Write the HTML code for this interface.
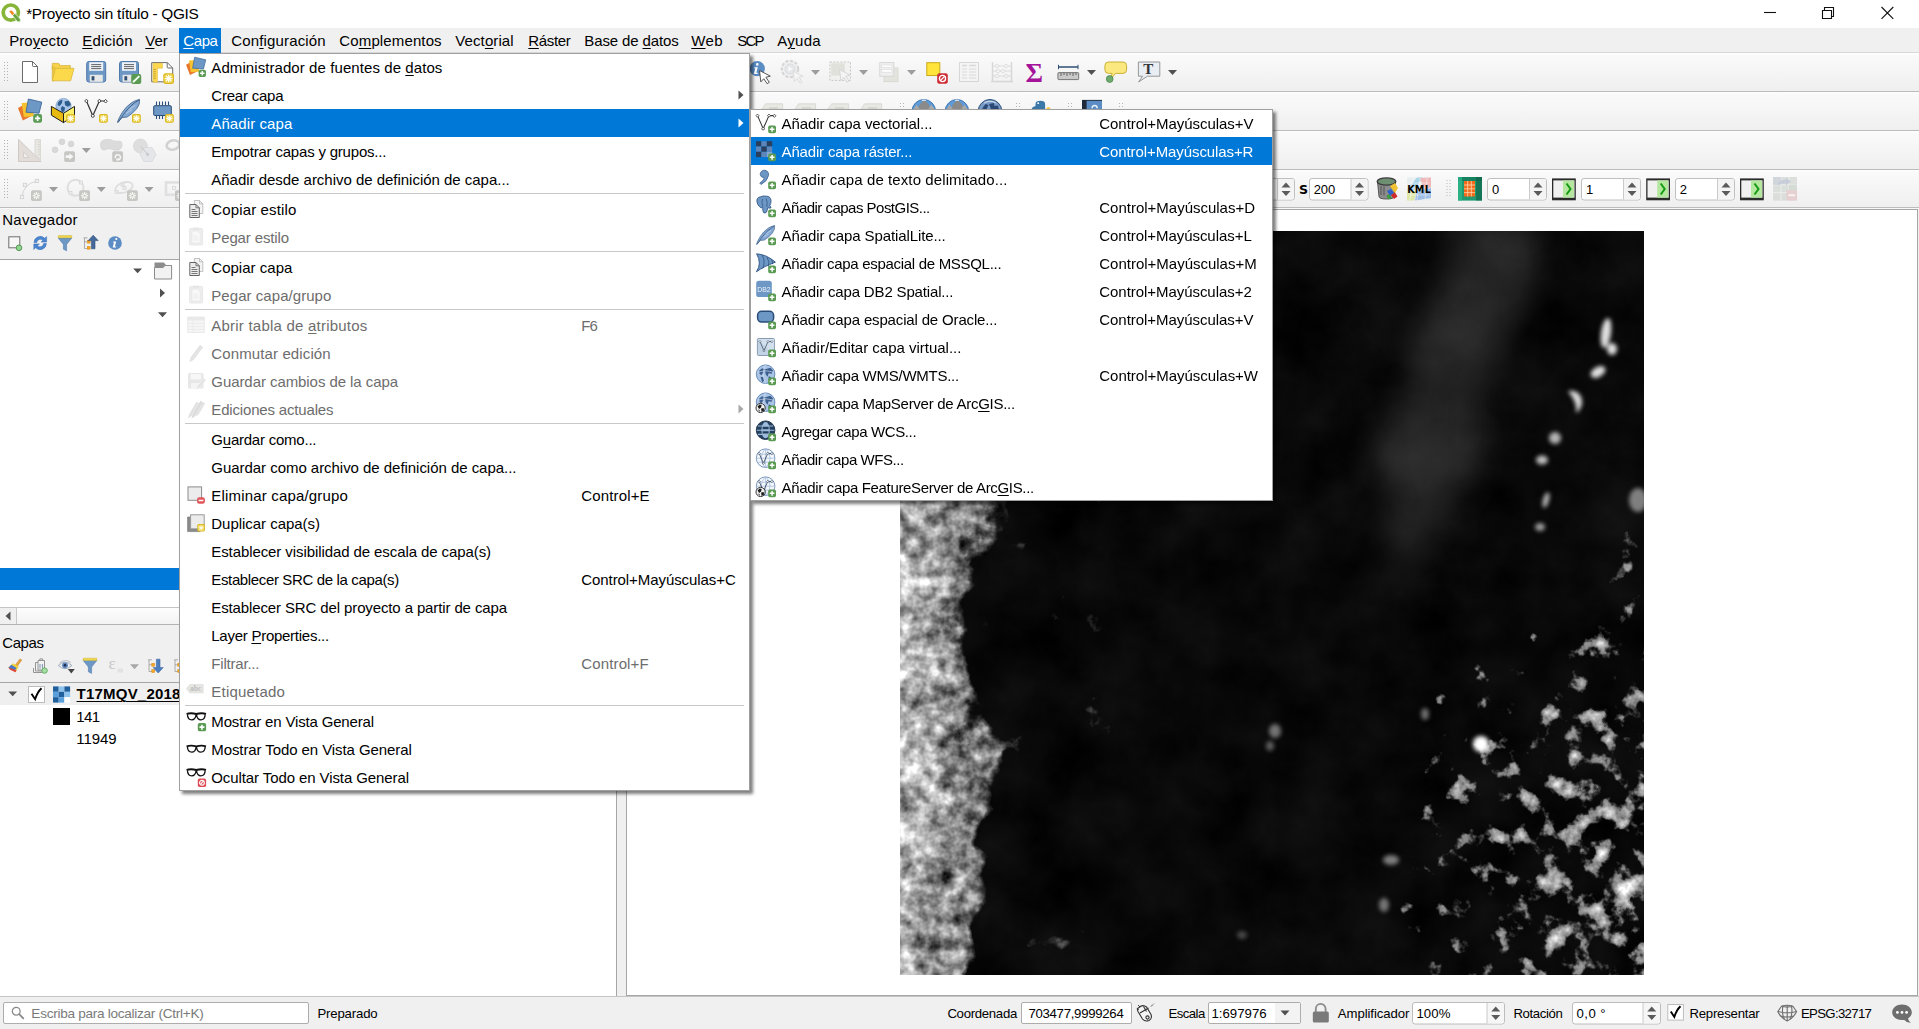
<!DOCTYPE html>
<html lang="es"><head><meta charset="utf-8"><title>*Proyecto sin título - QGIS</title>
<style>
html,body{margin:0;padding:0}
body{width:1919px;height:1029px;position:relative;overflow:hidden;background:#fff;font-family:"Liberation Sans",sans-serif;font-size:15px;color:#000}
div,span,svg{box-sizing:border-box}
.t{position:absolute;white-space:pre;line-height:20px}
.t u{text-decoration:underline;text-underline-offset:2px;text-decoration-thickness:1px}
svg{position:absolute;overflow:visible}
</style></head><body>
<div style="position:absolute;left:0px;top:0px;width:1919px;height:28px;background:#fff"></div>
<svg style="left:0px;top:0px" width="26" height="28" viewBox="0 0 26 28"><circle cx="10.800" cy="12.600" r="7.600" fill="none" stroke="#86b53a" stroke-width="3.700"/><path d="M12.600 15.600L14.900 13.300L20.300 19V21.800H17.400Z" fill="#6aa241" stroke="#f4fbe8" stroke-width=".7"/><path d="M9.300 11.500q.9-1.600 2.700-.7l2.300 2.500l-2 2z" fill="#f08a24"/></svg>
<span class="t" style="left:26.18px;top:3.86px;font-size:15.4px;color:#000;letter-spacing:-0.300px;">*Proyecto sin título - QGIS</span>
<svg style="left:1750px;top:0" width="169" height="28" viewBox="0 0 169 28"><g stroke="#111" stroke-width="1.1" fill="none"><path d="M14 12.5H26"/><path d="M72.5 10.5h9v8h-9z"/><path d="M74.5 10.5v-3h9v9h-2"/><path d="M131.500 7L143.300 18.800M143.300 7L131.500 18.800"/></g></svg>
<div style="position:absolute;left:0px;top:28px;width:1919px;height:25px;background:#f0f0f0"></div>
<div style="position:absolute;left:0px;top:52px;width:1919px;height:1px;background:#d9d9d9"></div>
<div style="position:absolute;left:179px;top:28px;width:42px;height:25px;background:#0078d7"></div>
<span class="t" style="left:9.30px;top:30.90px;font-size:15.0px;color:#000;letter-spacing:0.026px;">Pro<u>y</u>ecto</span>
<span class="t" style="left:82.30px;top:30.90px;font-size:15.0px;color:#000;letter-spacing:0.182px;"><u>E</u>dición</span>
<span class="t" style="left:145.30px;top:30.90px;font-size:15.0px;color:#000;letter-spacing:-0.053px;"><u>V</u>er</span>
<span class="t" style="left:183.30px;top:30.90px;font-size:15.0px;color:#fff;letter-spacing:-0.421px;"><u>C</u>apa</span>
<span class="t" style="left:231.30px;top:30.90px;font-size:15.0px;color:#000;letter-spacing:0.146px;">Con<u>f</u>iguración</span>
<span class="t" style="left:339.30px;top:30.90px;font-size:15.0px;color:#000;letter-spacing:0.130px;">Co<u>m</u>plementos</span>
<span class="t" style="left:455.30px;top:30.90px;font-size:15.0px;color:#000;letter-spacing:0.100px;">Vect<u>o</u>rial</span>
<span class="t" style="left:528.30px;top:30.90px;font-size:15.0px;color:#000;letter-spacing:-0.328px;"><u>R</u>áster</span>
<span class="t" style="left:584.30px;top:30.90px;font-size:15.0px;color:#000;letter-spacing:-0.122px;">Base de <u>d</u>atos</span>
<span class="t" style="left:691.30px;top:30.90px;font-size:15.0px;color:#000;letter-spacing:0.329px;"><u>W</u>eb</span>
<span class="t" style="left:737.30px;top:30.90px;font-size:15.0px;color:#000;letter-spacing:-1.778px;">SCP</span>
<span class="t" style="left:777.30px;top:30.90px;font-size:15.0px;color:#000;letter-spacing:0.252px;">A<u>y</u>uda</span>
<div style="position:absolute;left:0px;top:53px;width:1919px;height:38px;background:linear-gradient(#fdfdfd 0,#fdfdfd 1px,#fafafa 2px,#f5f5f5 50%,#efefef)"></div>
<div style="position:absolute;left:0px;top:91px;width:1919px;height:1px;background:#bcbcbc"></div>
<svg style="left:4px;top:62px" width="5" height="21" viewBox="0 0 5 21"><g fill="#b4b4b4"><rect x="0" y="0" width="1" height="1"/><rect x="3" y="0" width="1" height="1"/><rect x="0" y="3" width="1" height="1"/><rect x="3" y="3" width="1" height="1"/><rect x="0" y="6" width="1" height="1"/><rect x="3" y="6" width="1" height="1"/><rect x="0" y="9" width="1" height="1"/><rect x="3" y="9" width="1" height="1"/><rect x="0" y="12" width="1" height="1"/><rect x="3" y="12" width="1" height="1"/><rect x="0" y="15" width="1" height="1"/><rect x="3" y="15" width="1" height="1"/><rect x="0" y="18" width="1" height="1"/><rect x="3" y="18" width="1" height="1"/></g></svg>
<div style="position:absolute;left:0px;top:92px;width:1919px;height:38px;background:linear-gradient(#fdfdfd 0,#fdfdfd 1px,#fafafa 2px,#f5f5f5 50%,#efefef)"></div>
<div style="position:absolute;left:0px;top:130px;width:1919px;height:1px;background:#bcbcbc"></div>
<svg style="left:4px;top:101px" width="5" height="21" viewBox="0 0 5 21"><g fill="#b4b4b4"><rect x="0" y="0" width="1" height="1"/><rect x="3" y="0" width="1" height="1"/><rect x="0" y="3" width="1" height="1"/><rect x="3" y="3" width="1" height="1"/><rect x="0" y="6" width="1" height="1"/><rect x="3" y="6" width="1" height="1"/><rect x="0" y="9" width="1" height="1"/><rect x="3" y="9" width="1" height="1"/><rect x="0" y="12" width="1" height="1"/><rect x="3" y="12" width="1" height="1"/><rect x="0" y="15" width="1" height="1"/><rect x="3" y="15" width="1" height="1"/><rect x="0" y="18" width="1" height="1"/><rect x="3" y="18" width="1" height="1"/></g></svg>
<div style="position:absolute;left:0px;top:131px;width:1919px;height:38px;background:linear-gradient(#fdfdfd 0,#fdfdfd 1px,#fafafa 2px,#f5f5f5 50%,#efefef)"></div>
<div style="position:absolute;left:0px;top:169px;width:1919px;height:1px;background:#bcbcbc"></div>
<svg style="left:4px;top:140px" width="5" height="21" viewBox="0 0 5 21"><g fill="#b4b4b4"><rect x="0" y="0" width="1" height="1"/><rect x="3" y="0" width="1" height="1"/><rect x="0" y="3" width="1" height="1"/><rect x="3" y="3" width="1" height="1"/><rect x="0" y="6" width="1" height="1"/><rect x="3" y="6" width="1" height="1"/><rect x="0" y="9" width="1" height="1"/><rect x="3" y="9" width="1" height="1"/><rect x="0" y="12" width="1" height="1"/><rect x="3" y="12" width="1" height="1"/><rect x="0" y="15" width="1" height="1"/><rect x="3" y="15" width="1" height="1"/><rect x="0" y="18" width="1" height="1"/><rect x="3" y="18" width="1" height="1"/></g></svg>
<div style="position:absolute;left:0px;top:170px;width:1919px;height:37px;background:linear-gradient(#fdfdfd 0,#fdfdfd 1px,#fafafa 2px,#f5f5f5 50%,#efefef)"></div>
<div style="position:absolute;left:0px;top:207px;width:1919px;height:1px;background:#bcbcbc"></div>
<svg style="left:4px;top:179px" width="5" height="21" viewBox="0 0 5 21"><g fill="#b4b4b4"><rect x="0" y="0" width="1" height="1"/><rect x="3" y="0" width="1" height="1"/><rect x="0" y="3" width="1" height="1"/><rect x="3" y="3" width="1" height="1"/><rect x="0" y="6" width="1" height="1"/><rect x="3" y="6" width="1" height="1"/><rect x="0" y="9" width="1" height="1"/><rect x="3" y="9" width="1" height="1"/><rect x="0" y="12" width="1" height="1"/><rect x="3" y="12" width="1" height="1"/><rect x="0" y="15" width="1" height="1"/><rect x="3" y="15" width="1" height="1"/><rect x="0" y="18" width="1" height="1"/><rect x="3" y="18" width="1" height="1"/></g></svg>
<svg style="left:0px;top:53px" width="1919" height="156" viewBox="0 53 1919 156"><path d="M22.500 61.500h10l5 5v16h-15z" fill="#fff" stroke="#6b6b6b" stroke-width="1" stroke-linejoin="round"/><path d="M32.500 61.600v4.100q0 .8 .8 .8h4.100" fill="none" stroke="#6b6b6b" stroke-width="1"/><path d="M52.3 63.4h6.6l1.2 2.2h10.2v4h-18z" fill="#f7d24a" stroke="#d6b43c" stroke-width=".8" stroke-linejoin="round"/><path d="M52.3 66v14.8h1.5l2-12z" fill="#efc73f" stroke="#d6b43c" stroke-width=".8"/><path d="M55.4 68.4h18.6l-3.4 12.4h-18.3z" fill="#fcd94a" stroke="#d9b73e" stroke-width=".8" stroke-linejoin="round"/><g transform="translate(86.2 61)"><rect x="0.5" y="0.5" width="19" height="20.5" rx="2.2" fill="#6d97c4" stroke="#4f79ab"/><rect x="3" y="1.2" width="14" height="8.6" fill="#eef2f8"/><path d="M5 3.6h10M5 5.6h10M5 7.6h10" stroke="#555" stroke-width="0.9"/><rect x="3.6" y="13.8" width="13" height="7" fill="#e8e8e8"/><rect x="5.4" y="15.2" width="2.8" height="4.2" fill="#2f4f70"/></g><g transform="translate(119 61)"><rect x="0.5" y="0.5" width="19" height="20.5" rx="2.2" fill="#6d97c4" stroke="#4f79ab"/><rect x="3" y="1.2" width="14" height="8.6" fill="#eef2f8"/><path d="M5 3.6h10M5 5.6h10M5 7.6h10" stroke="#555" stroke-width="0.9"/><rect x="3.6" y="13.8" width="13" height="7" fill="#e8e8e8"/><rect x="5.4" y="15.2" width="2.8" height="4.2" fill="#2f4f70"/></g><g transform="translate(131.2 74)"><rect x="0" y="0" width="10" height="10" rx="2" fill="#5a9a52"/><path d="M2.3 7.7L7.6 2.6" stroke="#f2fff0" stroke-width="1.9" stroke-linecap="round"/></g><path d="M151.7 62.6h15.6l5.4 5.4v13.8h-21z" fill="#fff" stroke="#6b6b6b" stroke-width="1" stroke-linejoin="round"/><path d="M167.2 62.8v4.4q0 .8 .8 .8h4.4" fill="none" stroke="#6b6b6b"/><path d="M153 63.3h9.4v4.9h-5v14h-4.4z" fill="#fbd84e" stroke="#e0b93a" stroke-width=".6"/><path d="M153.6 69.5h2.2M153.6 71.7h2.2M153.6 73.9h2.2M153.6 76.1h2.2M153.6 78.3h2.2" stroke="#b8942a" stroke-width=".8"/><g transform="translate(163.3 73.2) scale(1.1888888888888889)"><rect x="0" y="0" width="9" height="9" rx="1.8" fill="#d9b51c"/><rect x="0.8" y="0.8" width="7.4" height="7.4" rx="1.2" fill="#ecd04a"/><path d="M4.5 1.3v6.4M1.3 4.5h6.4M2.2 2.2l4.6 4.6M6.8 2.2l-4.6 4.6" stroke="#fffdf0" stroke-width="1.1"/></g><circle cx="757.200" cy="68.600" r="7.700" fill="#5b8cc4"/><path d="M756 64.400a1.300 1.300 0 1 0 2.600 0a1.300 1.300 0 1 0-2.600 0zM754.400 67.200h3.400l-1.500 5.600h1.500l-.3 1.100h-3.700l1.500-5.600h-1.200z" fill="#fff"/><path d="M759.5 70.5l10.8 5.6l-4.4 1.2l3.4 5l-2.2 1.4l-3.3-5l-3 3.2z" fill="#fff" stroke="#444" stroke-width=".9" stroke-linejoin="round"/><g opacity=".55"><circle cx="790" cy="69" r="8.2" fill="#ececec" stroke="#bdbdbd" stroke-width="2.2" stroke-dasharray="3.2 1.6"/><circle cx="790" cy="69" r="5" fill="#d8dce2" stroke="#c3c7cd"/><path d="M788.4 66.5l4.2 2.5l-4.2 2.5z" fill="#fff"/><path d="M793 71l10 5.2l-4 1.1l3.1 4.6l-2 1.3l-3-4.6l-2.8 3z" fill="#f4f4f4" stroke="#c6c6c6" stroke-width=".9"/></g><path d="M811 70h9l-4.5 5z" fill="#9d9d9d"/><g opacity=".7"><rect x="829.9" y="62" width="20.6" height="18.4" fill="#f1f1ef" stroke="#b5b5b5" stroke-dasharray="2 1.5"/><rect x="831.2" y="63.2" width="13.6" height="12.4" fill="#d9d9d1"/><path d="M839.5 69.5l10.5 5.6l-4.2 1.1l3.2 4.8l-2 1.3l-3.2-4.8l-2.9 3.1z" fill="#f4f4f4" stroke="#c6c6c6" stroke-width=".9"/></g><path d="M859 70h9l-4.5 5z" fill="#9d9d9d"/><g opacity=".7"><rect x="884" y="68" width="14" height="13.6" fill="#deded6" stroke="#cfcfc8"/><rect x="879.8" y="62.6" width="14" height="13.6" fill="#eee" stroke="#c9c9c9"/><rect x="881.6" y="65" width="10.4" height="2.6" fill="#fff" stroke="#d0d0d0" stroke-width=".6"/><rect x="881.6" y="69.6" width="10.4" height="2.6" fill="#fff" stroke="#d0d0d0" stroke-width=".6"/></g><path d="M907 70h9l-4.5 5z" fill="#9d9d9d"/><rect x="926.8" y="62.7" width="13" height="12.8" fill="#ffe53b" stroke="#c9a91a" stroke-width="1"/><g transform="translate(937.2 73.2) scale(1.06)"><rect x="0" y="0" width="10" height="10" rx="2" fill="#cf2b35"/><circle cx="5" cy="5" r="2.9" fill="none" stroke="#fff" stroke-width="1.3"/><path d="M3 7L7 3" stroke="#fff" stroke-width="1.3"/></g><g opacity=".6" fill="none" stroke="#c4c4c4"><rect x="959.5" y="62.5" width="19" height="19" fill="#f4f4f4"/><path d="M962 65.5h5M969 65.5h7" stroke-width="1.6"/><path d="M962 69h5M969 69h7M962 72h5M969 72h7M962 75h5M969 75h7M962 78h5M969 78h7" stroke-width=".9"/></g><g opacity=".6" fill="none" stroke="#c4c4c4"><path d="M992.5 62v19M1011.5 62v19M991 81.5h22" stroke-width="1.4"/><path d="M993 66h18M993 71h18M993 76h18" stroke-width=".8"/><path d="M997 64l2.5 2l-2.5 2l-2.5-2zM1006 64l2.5 2l-2.5 2l-2.5-2zM998 69l2.5 2l-2.5 2l-2.5-2zM1003 69l2.5 2l-2.5 2l-2.5-2zM997 74l2.5 2l-2.5 2l-2.5-2zM1006 74l2.5 2l-2.5 2l-2.5-2z" fill="#f2f2f2" stroke-width=".8"/></g><text x="1025.6" y="81.6" font-family="'Liberation Serif',serif" font-weight="bold" font-size="27.5" fill="#a4139a" textLength="17.5" lengthAdjust="spacingAndGlyphs">Σ</text><path d="M1058.5 64.8v4.4M1078 64.8v4.4" stroke="#2c4f75" stroke-width="1"/><path d="M1058.5 67h19.5" stroke="#2c4f75" stroke-width="1.5"/><rect x="1057.9" y="72.6" width="20.8" height="7" rx=".8" fill="#c9c9c9" stroke="#6a6a6a" stroke-width=".9"/><path d="M1061 73v3M1064 73v2M1067 73v3M1070 73v2M1073 73v3M1076 73v2" stroke="#555" stroke-width=".9"/><path d="M1087 70h9l-4.5 5z" fill="#505050"/><path d="M1108.5 62h14.5q3.6 0 3.6 3.6v4.2q0 3.6-3.6 3.6h-7.6l-3.4 4.4l-1.2-.8l1.4-3.6h-3.7q-3.6 0-3.6-3.6v-4.2q0-3.6 3.6-3.6z" fill="#fbe97f" stroke="#c4a92b" stroke-width=".9"/><circle cx="1109.7" cy="79" r="3.4" fill="#6faa6f" stroke="#4f8a50" stroke-width=".8"/><path d="M1138.4 62h21.4v14.2h-12.4l-8.8 5.8l4-5.8h-4.2z" fill="#e9eef4" stroke="#8d8d8d" stroke-width=".9" stroke-linejoin="round"/><text x="1143.2" y="74" font-family="'Liberation Serif',serif" font-weight="bold" font-size="15" fill="#333">T</text><path d="M1168 70h9l-4.5 5z" fill="#505050"/><g transform="translate(18 99)"><path d="M0 9l8.6-4.8l5.4 12.6l-9.2 4.6z" fill="#e8762d"/><path d="M3.6 3.9l11.2-.6l1 14l-10 .8z" fill="#f6c22d"/><path d="M10.4 0l13.4 3.2l-2.8 11l-13-1z" fill="#6d97c4" stroke="#3f6a99" stroke-width=".9" stroke-linejoin="round"/><g transform="translate(15.2 15) scale(0.9777777777777779)"><rect x="0" y="0" width="9" height="9" rx="2" fill="#5a9a52"/><path d="M4.5 1.8v5.4M1.8 4.5h5.4" stroke="#fff" stroke-width="1.7"/></g></g><circle cx="63.5" cy="106" r="7.6" fill="#a9c6ea" stroke="#6d8fb8" stroke-width=".6"/><path d="M58 102.5q2-3 4.5-2.6l-.6 3.4l-2.2 2.6l-2.1-.6zM64.5 101.5l3.8-.8q2.4 1.6 2.6 4.4l-3 1.6l-2.8-1.4zM62 106l3 1.6l-.6 3.6l-2.4 1.2l-1.2-3.6z" fill="#2f5d8e"/><path d="M51.4 106.4l12.1 6.9v9.3l-12.1-7.4z" fill="#e8b90f" stroke="#1e1e1e" stroke-width="1" stroke-linejoin="round"/><path d="M63.5 113.3l11-6.9v8.8l-11 7.4z" fill="#fdf16a" stroke="#1e1e1e" stroke-width="1" stroke-linejoin="round"/><g transform="translate(66.2 114) scale(0.9777777777777779)"><rect x="0" y="0" width="9" height="9" rx="1.8" fill="#d9b51c"/><rect x="0.8" y="0.8" width="7.4" height="7.4" rx="1.2" fill="#ecd04a"/><path d="M4.5 1.3v6.4M1.3 4.5h6.4M2.2 2.2l4.6 4.6M6.8 2.2l-4.6 4.6" stroke="#fffdf0" stroke-width="1.1"/></g><g transform="translate(85.8 98.8)"><path d="M0.6 2.2L7 17M13.6 2.2L7 17M13.6 2.2h6" fill="none" stroke="#333" stroke-width="1.2"/><g fill="#fff" stroke="#333" stroke-width=".9"><path d="M0.6 .4l1.7 1.8l-1.7 1.8l-1.7-1.8zM13.6 .4l1.7 1.8l-1.7 1.8l-1.7-1.8zM19.8 .6l1.7 1.8l-1.7 1.8l-1.7-1.8z"/><circle cx="7" cy="17" r="1.5"/></g></g><g transform="translate(99 114) scale(0.9777777777777779)"><rect x="0" y="0" width="9" height="9" rx="1.8" fill="#d9b51c"/><rect x="0.8" y="0.8" width="7.4" height="7.4" rx="1.2" fill="#ecd04a"/><path d="M4.5 1.3v6.4M1.3 4.5h6.4M2.2 2.2l4.6 4.6M6.8 2.2l-4.6 4.6" stroke="#fffdf0" stroke-width="1.1"/></g><g transform="translate(117.2 99)"><path d="M22.4 .4q.6 5-3 9.4q-4 4.8-9.4 8.2l-5 .6q-2.6 2.4-4.4 5l-.4-.4q1.8-5 5-10q3.6-5.6 8.8-9.2q4-2.8 8.400-3.600z" fill="#86a9d4" stroke="#3a5f88" stroke-width=".8" stroke-linejoin="round"/><path d="M21.8 1q-9 5-15.600 14.600q-3 4.400-5.200 7.600" fill="none" stroke="#35577f" stroke-width=".9"/><path d="M18 6.500l-6.600 4.200M14.800 10.800l-6 3.400" stroke="#c5d8ef" stroke-width=".8"/></g><g transform="translate(132 114) scale(0.9777777777777779)"><rect x="0" y="0" width="9" height="9" rx="1.8" fill="#d9b51c"/><rect x="0.8" y="0.8" width="7.4" height="7.4" rx="1.2" fill="#ecd04a"/><path d="M4.5 1.3v6.4M1.3 4.5h6.4M2.2 2.2l4.6 4.6M6.8 2.2l-4.6 4.6" stroke="#fffdf0" stroke-width="1.1"/></g><path d="M156.500 101.500v4M159.500 101.500v4M162.500 101.500v4M165.500 101.500v4M168.500 101.500v4M156.500 115.500v3.600M159.500 115.500v3.600M162.500 115.500v3.600M165.500 115.500v3.600" stroke="#2a4d78" stroke-width="1.100"/><rect x="153.700" y="105.700" width="17.600" height="9.800" rx="1" fill="#6d97c4" stroke="#2a4d78" stroke-width="1"/><g transform="translate(165 114) scale(0.9777777777777779)"><rect x="0" y="0" width="9" height="9" rx="1.8" fill="#d9b51c"/><rect x="0.8" y="0.8" width="7.4" height="7.4" rx="1.2" fill="#ecd04a"/><path d="M4.5 1.3v6.4M1.3 4.5h6.4M2.2 2.2l4.6 4.6M6.8 2.2l-4.6 4.6" stroke="#fffdf0" stroke-width="1.1"/></g><path d="M18.500 139.400v22.100h22.600z" fill="#e3ddd9" stroke="#cbc5c1" stroke-width=".9" stroke-linejoin="round"/><path d="M23.600 152.200v5.200h5.400z" fill="#f4f4f4" stroke="#cbc5c1" stroke-width=".8"/><path d="M35 139.600h5.500v20l-5.500-5.500z" fill="#e9e7e1" stroke="#d2d0ca" stroke-width=".7"/><path d="M38 142h2M38 144.500h2M38 147h2M38 149.500h2M38 152h2M38 154.500h2" stroke="#cfcdc6" stroke-width=".7"/><g fill="#d8d8d8" stroke="#cdcdcd" stroke-width=".6"><circle cx="62" cy="141.800" r="2.900"/><circle cx="71" cy="144" r="2.900"/><circle cx="55" cy="149.800" r="2.900"/></g><g transform="translate(64.2 151.2) scale(1.08)"><rect x="0" y="0" width="10" height="10" rx="1.600" fill="#c6c6c3"/><path d="M1.4 3.8h3.4v-2l3.8 3.2l-3.8 3.2v-2h-3.4z" fill="#f6f6f6"/></g><path d="M81.8 148h9l-4.5 5z" fill="#9d9d9d"/><path d="M100.500 146q-1-5.500 5-6.500q4-.6 8 1.200q3.500 1 6.500.400q2.500.800 2 4.600q-.800 4.400-5 4.600q-3.500-.200-6.500-1.400q-3.500-.600-6.500 1.400q-3-.600-3.500-4.300z" fill="#dbdbdb" stroke="#d0d0d0" stroke-width=".6"/><g transform="translate(112.2 151.2) scale(1.08)"><rect x="0" y="0" width="10" height="10" rx="1.600" fill="#c6c6c3"/><path d="M3 6.4a2.4 2.4 0 1 1 2.6 1.6" fill="none" stroke="#f6f6f6" stroke-width="1.4"/><path d="M6.6 6.6l-1.600 2.800l-1.800-2.400z" fill="#f6f6f6"/></g><circle cx="140.400" cy="146" r="7" fill="#dedede" stroke="#d2d2d2" stroke-width=".6"/><path d="M140 154.500l4-7h8l4 7l-4 7h-8z" fill="#e4e6ea" stroke="#d4d6da" stroke-width=".7"/><path d="M141 146.500l6.500 7.500" stroke="#c2c2c2" stroke-width=".9"/><rect x="146.400" y="153.200" width="2.400" height="2.400" fill="#c4c4c4"/><ellipse cx="173" cy="145" rx="6.500" ry="4.600" fill="none" stroke="#d2d2d2" stroke-width="2.600" transform="rotate(-12 173 145)"/><path d="M22 197q1-13 15-16" fill="none" stroke="#d6d6d6" stroke-width="1"/><g fill="#f0f0f0" stroke="#d0d0d0" stroke-width=".8"><rect x="20.300" y="195.300" width="3.400" height="3.400"/><rect x="23.300" y="183.300" width="3.400" height="3.400"/><rect x="35.300" y="179.300" width="3.400" height="3.400"/></g><g transform="translate(31 190.3) scale(1.08)"><rect x="0" y="0" width="10" height="10" rx="1.600" fill="#c6c6c3"/><path d="M5 1.6v6.8M1.6 5h6.8M2.6 2.6l4.8 4.8M7.4 2.6l-4.8 4.8" stroke="#f4f4f2" stroke-width="1.2"/><circle cx="5" cy="5" r="1" fill="#c9c9c5"/></g><path d="M49 187h9l-4.5 5z" fill="#9d9d9d"/><circle cx="75.500" cy="187.800" r="8" fill="none" stroke="#dedede" stroke-width="2"/><g fill="#ececec" stroke="#d4d4d4" stroke-width=".7"><rect x="79.500" y="181" width="3" height="3"/><rect x="69" y="191.500" width="3" height="3"/></g><g transform="translate(79.2 190.3) scale(1.08)"><rect x="0" y="0" width="10" height="10" rx="1.600" fill="#c6c6c3"/><path d="M5 1.6v6.8M1.6 5h6.8M2.6 2.6l4.8 4.8M7.4 2.6l-4.8 4.8" stroke="#f4f4f2" stroke-width="1.2"/><circle cx="5" cy="5" r="1" fill="#c9c9c5"/></g><path d="M96.8 187h9l-4.5 5z" fill="#9d9d9d"/><ellipse cx="124" cy="187.500" rx="9" ry="5" fill="none" stroke="#dedede" stroke-width="1.800" transform="rotate(-18 124 187.500)"/><g fill="#ececec" stroke="#d4d4d4" stroke-width=".7"><rect x="121" y="183" width="3" height="3"/><rect x="123" y="186.500" width="3" height="3"/><rect x="115" y="190.500" width="3" height="3"/></g><g transform="translate(127 190.3) scale(1.08)"><rect x="0" y="0" width="10" height="10" rx="1.600" fill="#c6c6c3"/><path d="M5 1.6v6.8M1.6 5h6.8M2.6 2.6l4.8 4.8M7.4 2.6l-4.8 4.8" stroke="#f4f4f2" stroke-width="1.2"/><circle cx="5" cy="5" r="1" fill="#c9c9c5"/></g><path d="M144.6 187h9l-4.5 5z" fill="#9d9d9d"/><rect x="166" y="182.400" width="16" height="12.400" fill="none" stroke="#e0e0e0" stroke-width="2.600"/><rect x="172.300" y="186.300" width="3.200" height="3.200" fill="#f0f0f0" stroke="#d4d4d4" stroke-width=".7"/><g transform="translate(175 190.3) scale(1.08)"><rect x="0" y="0" width="10" height="10" rx="1.600" fill="#c6c6c3"/><path d="M5 1.6v6.8M1.6 5h6.8M2.6 2.6l4.8 4.8M7.4 2.6l-4.8 4.8" stroke="#f4f4f2" stroke-width="1.2"/><circle cx="5" cy="5" r="1" fill="#c9c9c5"/></g><g fill="#b4b4b4"><rect x="900" y="103" width="1" height="1"/><rect x="903" y="103" width="1" height="1"/><rect x="900" y="106" width="1" height="1"/><rect x="903" y="106" width="1" height="1"/><rect x="900" y="109" width="1" height="1"/><rect x="903" y="109" width="1" height="1"/><rect x="900" y="112" width="1" height="1"/><rect x="903" y="112" width="1" height="1"/><rect x="900" y="115" width="1" height="1"/><rect x="903" y="115" width="1" height="1"/></g><g fill="#b4b4b4"><rect x="1016" y="103" width="1" height="1"/><rect x="1019" y="103" width="1" height="1"/><rect x="1016" y="106" width="1" height="1"/><rect x="1019" y="106" width="1" height="1"/><rect x="1016" y="109" width="1" height="1"/><rect x="1019" y="109" width="1" height="1"/><rect x="1016" y="112" width="1" height="1"/><rect x="1019" y="112" width="1" height="1"/><rect x="1016" y="115" width="1" height="1"/><rect x="1019" y="115" width="1" height="1"/></g><g fill="#b4b4b4"><rect x="1068" y="103" width="1" height="1"/><rect x="1071" y="103" width="1" height="1"/><rect x="1068" y="106" width="1" height="1"/><rect x="1071" y="106" width="1" height="1"/><rect x="1068" y="109" width="1" height="1"/><rect x="1071" y="109" width="1" height="1"/><rect x="1068" y="112" width="1" height="1"/><rect x="1071" y="112" width="1" height="1"/><rect x="1068" y="115" width="1" height="1"/><rect x="1071" y="115" width="1" height="1"/></g><g fill="#b4b4b4"><rect x="1119" y="103" width="1" height="1"/><rect x="1122" y="103" width="1" height="1"/><rect x="1119" y="106" width="1" height="1"/><rect x="1122" y="106" width="1" height="1"/><rect x="1119" y="109" width="1" height="1"/><rect x="1122" y="109" width="1" height="1"/><rect x="1119" y="112" width="1" height="1"/><rect x="1122" y="112" width="1" height="1"/><rect x="1119" y="115" width="1" height="1"/><rect x="1122" y="115" width="1" height="1"/></g><path d="M762 109l3.600-5.200h17v5.200z" fill="#e9e9e3" stroke="#d4d4d0" stroke-width=".8"/><path d="M769 108h9" stroke="#d0d0cc" stroke-width="1.500"/><path d="M795 109l3.600-5.200h17v5.200z" fill="#e9e9e3" stroke="#d4d4d0" stroke-width=".8"/><path d="M802 108h9" stroke="#d0d0cc" stroke-width="1.500"/><path d="M828 109l3.600-5.200h17v5.200z" fill="#e9e9e3" stroke="#d4d4d0" stroke-width=".8"/><path d="M835 108h9" stroke="#d0d0cc" stroke-width="1.500"/><path d="M861 109l3.600-5.200h17v5.200z" fill="#e9e9e3" stroke="#d4d4d0" stroke-width=".8"/><path d="M868 108h9" stroke="#d0d0cc" stroke-width="1.500"/><circle cx="923.8" cy="111.300" r="11.800" fill="#5d9ad8" stroke="#3d70ad" stroke-width=".9"/><path d="M919.8 104.500l3-3.500h3l3 3.500l2 4.500h-13z" fill="#8a8a8a"/><path d="M913.8 109l2.500-4.500l3.500 4.500zM928.3 109l3-4.500l3 4.500z" fill="#a8a8a8"/><path d="M921.8 100.500q2-.800 4 0" stroke="#dfeefc" stroke-width="1.200" fill="none"/><circle cx="956.9" cy="111.300" r="11.800" fill="#5d9ad8" stroke="#3d70ad" stroke-width=".9"/><path d="M952.9 104.500l3-3.500h3l3 3.500l2 4.500h-13z" fill="#8a8a8a"/><path d="M946.9 109l2.500-4.500l3.500 4.500zM961.4 109l3-4.500l3 4.500z" fill="#a8a8a8"/><path d="M954.9 100.500q2-.800 4 0" stroke="#dfeefc" stroke-width="1.200" fill="none"/><circle cx="990" cy="111.300" r="11.800" fill="#7a9cc6" stroke="#2d4f7d" stroke-width="1"/><path d="M982 108.500l3.500-4.500l3 1l-2 4.500zM989 104l5-1l.500 3l3.500-.500l1 4h-8z" fill="#2b4a77"/><path d="M984 103q6-3.500 12 0" stroke="#dbe6f4" stroke-width=".9" fill="none"/><path d="M1031.500 109.500q.500-3 4-3.200v-2.300q0-3.200 5-3.200q4.600 0 4.600 3.200v5.500z" fill="#3b77a8"/><circle cx="1038.200" cy="103.200" r=".9" fill="#fff"/><path d="M1046 109.500q.300-2.600 2.400-2.600q2 0 2.400 2.600z" fill="#f7c93e"/><rect x="1082" y="100" width="20" height="12" fill="#5b8cc4"/><rect x="1082" y="100" width="4.600" height="12" fill="#1e2a3a"/><path d="M1082 100.400h20" stroke="#1e2a3a" stroke-width=".9"/><path d="M1092.200 108.200q-.200-2.600 2.400-2.600q2.400 0 2.600 2.600" fill="none" stroke="#eaf1fa" stroke-width="1.500"/><rect x="1260" y="178.5" width="34.5" height="21.5" rx="2.500" fill="#fff" stroke="#b9b9b9" stroke-width=".9"/><path d="M1277.5 179.0h14.5q2 0 2 2v16.5q0 2-2 2h-14.5z" fill="#f4f4f4"/><path d="M1277.5 179.0v20.5" stroke="#c4c4c4" stroke-width=".9"/><path d="M1281.5 187.5h9l-4.500-5z" fill="#5a5a5a"/><path d="M1281.5 191.0h9l-4.500 5z" fill="#5a5a5a"/><rect x="1309.5" y="178.5" width="58.5" height="21.5" rx="2.500" fill="#fff" stroke="#b9b9b9" stroke-width=".9"/><path d="M1351.0 179.0h14.5q2 0 2 2v16.5q0 2-2 2h-14.5z" fill="#f4f4f4"/><path d="M1351.0 179.0v20.5" stroke="#c4c4c4" stroke-width=".9"/><path d="M1355.0 187.5h9l-4.500-5z" fill="#5a5a5a"/><path d="M1355.0 191.0h9l-4.500 5z" fill="#5a5a5a"/><rect x="1487.5" y="178.5" width="59" height="21.5" rx="2.500" fill="#fff" stroke="#b9b9b9" stroke-width=".9"/><path d="M1529.5 179.0h14.5q2 0 2 2v16.5q0 2-2 2h-14.5z" fill="#f4f4f4"/><path d="M1529.5 179.0v20.5" stroke="#c4c4c4" stroke-width=".9"/><path d="M1533.5 187.5h9l-4.500-5z" fill="#5a5a5a"/><path d="M1533.5 191.0h9l-4.500 5z" fill="#5a5a5a"/><rect x="1581.5" y="178.5" width="59" height="21.5" rx="2.500" fill="#fff" stroke="#b9b9b9" stroke-width=".9"/><path d="M1623.5 179.0h14.5q2 0 2 2v16.5q0 2-2 2h-14.5z" fill="#f4f4f4"/><path d="M1623.5 179.0v20.5" stroke="#c4c4c4" stroke-width=".9"/><path d="M1627.5 187.5h9l-4.500-5z" fill="#5a5a5a"/><path d="M1627.5 191.0h9l-4.500 5z" fill="#5a5a5a"/><rect x="1675.5" y="178.5" width="59" height="21.5" rx="2.500" fill="#fff" stroke="#b9b9b9" stroke-width=".9"/><path d="M1717.5 179.0h14.5q2 0 2 2v16.5q0 2-2 2h-14.5z" fill="#f4f4f4"/><path d="M1717.5 179.0v20.5" stroke="#c4c4c4" stroke-width=".9"/><path d="M1721.5 187.5h9l-4.500-5z" fill="#5a5a5a"/><path d="M1721.5 191.0h9l-4.500 5z" fill="#5a5a5a"/><rect x="1552" y="178.400" width="23.800" height="21.900" fill="#2b2b2b"/><rect x="1553.3" y="180.400" width="21.200" height="17.200" fill="#f0f0f0"/><rect x="1563" y="180.400" width="11" height="17.200" fill="#b5e7a0"/><path d="M1566.5 183.500l4 5.500l-4 5.500" fill="none" stroke="#169a12" stroke-width="2"/><rect x="1646.2" y="178.400" width="23.800" height="21.900" fill="#2b2b2b"/><rect x="1647.5" y="180.400" width="21.200" height="17.200" fill="#f0f0f0"/><rect x="1657.2" y="180.400" width="11" height="17.200" fill="#b5e7a0"/><path d="M1660.7 183.500l4 5.500l-4 5.500" fill="none" stroke="#169a12" stroke-width="2"/><rect x="1740" y="178.400" width="23.800" height="21.900" fill="#2b2b2b"/><rect x="1741.3" y="180.400" width="21.200" height="17.200" fill="#f0f0f0"/><rect x="1751" y="180.400" width="11" height="17.200" fill="#b5e7a0"/><path d="M1754.5 183.500l4 5.500l-4 5.500" fill="none" stroke="#169a12" stroke-width="2"/><path d="M1377.500 181.500l1.500 15q0 2.500 7.500 2.500t7.500-2.500l1.500-15z" fill="#8c8c8c" stroke="#4a4a4a" stroke-width=".9"/><ellipse cx="1386.500" cy="181.500" rx="9.300" ry="3.600" fill="#6f8f73" stroke="#3a3a3a" stroke-width="1.400"/><path d="M1381 186v9M1384 186.500v9" stroke="#5a5a5a" stroke-width="1.100"/><path d="M1390 186l5-3l3 5l-3 5z" fill="#f1c232"/><path d="M1387 191l4-2l3 4l-4 3z" fill="#2e62c9"/><path d="M1391 195l4-2.500l2.500 4l-3.500 2.500z" fill="#cf2a2a"/><path d="M1386.500 195.500l3-1l2 3.500l-3 1.500z" fill="#3c9a3c"/><g><rect x="1407" y="177.500" width="24" height="23" fill="#e8eef0"/><path d="M1407 190l10-12.500h6l-9 12.500z" fill="#a8d4e8"/><path d="M1420 178l11-.500v10l-7 3z" fill="#f0b8b8"/><path d="M1407 191h10l-3 9.500h-7z" fill="#dfe8a8"/><path d="M1417 190.500l14-2.500v10l-16 2.500z" fill="#9fbfe6"/><path d="M1409 183h20M1408 188h22M1410 195h20M1413 178l-3 22M1420 178l-3 22M1427 178l-2 22" stroke="#fff" stroke-width=".6" opacity=".8"/></g><g fill="#b4b4b4"><rect x="1446.5" y="180" width="1" height="1"/><rect x="1449.5" y="180" width="1" height="1"/><rect x="1446.5" y="183" width="1" height="1"/><rect x="1449.5" y="183" width="1" height="1"/><rect x="1446.5" y="186" width="1" height="1"/><rect x="1449.5" y="186" width="1" height="1"/><rect x="1446.5" y="189" width="1" height="1"/><rect x="1449.5" y="189" width="1" height="1"/><rect x="1446.5" y="192" width="1" height="1"/><rect x="1449.5" y="192" width="1" height="1"/><rect x="1446.5" y="195" width="1" height="1"/><rect x="1449.5" y="195" width="1" height="1"/></g><rect x="1458" y="177" width="24" height="23.600" fill="#1f9a72"/><path d="M1458 177h24v4h-24z" fill="#0c6b4c" opacity=".5"/><path d="M1476 177h6v23.600h-6z" fill="#0c5a42" opacity=".55"/><path d="M1458 177h4v23.600h-4z" fill="#35c193" opacity=".6"/><rect x="1464" y="181" width="11" height="15.500" fill="#f26a1b"/><path d="M1467.700 181v15.500M1471.300 181v15.500M1464 185h11M1464 188.800h11M1464 192.600h11" stroke="#ffd9b0" stroke-width=".8"/><g opacity=".75"><rect x="1773" y="177" width="24" height="23.600" fill="#d3d8d3"/><path d="M1773 184.800h24M1773 192.600h24M1781 177v23.600M1789 177v23.600" stroke="#e9ece9" stroke-width="1"/><rect x="1773" y="177" width="8" height="7.800" fill="#c3cbd3"/><rect x="1789" y="184.800" width="8" height="7.800" fill="#c9d1c9"/><path d="M1777 185q2-5.500 9-5.500v-2l5 4l-5 4v-2q-5 0-9 1.500z" fill="#b7bfd0"/><rect x="1786.500" y="190" width="10.500" height="10.500" rx="1.500" fill="#e2c4c4"/><path d="M1788.500 195.200h6.500" stroke="#faf4f4" stroke-width="2"/></g></svg>
<span class="t" style="left:1299.01px;top:180.13px;font-size:12.6px;color:#000;font-weight:bold;font-family:'DejaVu Sans','Liberation Sans',sans-serif;">S</span>
<span class="t" style="left:1313.69px;top:180.00px;font-size:13px;color:#000;letter-spacing:-0.116px;">200</span>
<span class="t" style="left:1491.99px;top:180.00px;font-size:13px;color:#000;">0</span>
<span class="t" style="left:1585.99px;top:180.00px;font-size:13px;color:#000;">1</span>
<span class="t" style="left:1679.69px;top:180.00px;font-size:13px;color:#000;">2</span>
<span class="t" style="left:1407.15px;top:180.07px;font-size:9.6px;color:#000;letter-spacing:0.275px;font-weight:bold;font-family:'DejaVu Sans','Liberation Sans',sans-serif;">KML</span>
<div style="position:absolute;left:0px;top:208px;width:1919px;height:788px;background:#f0f0f0"></div>
<div style="position:absolute;left:0px;top:208px;width:1919px;height:1px;background:#f8f8f8"></div>
<div style="position:absolute;left:626px;top:209px;width:1292px;height:787px;background:#fff;border:1px solid #a6a6a6"></div>
<svg style="left:900px;top:231px" width="744" height="744" viewBox="0 0 744 744">
<defs>
<filter id="fTer" x="0" y="0" width="100%" height="100%" color-interpolation-filters="sRGB">
<feTurbulence type="fractalNoise" baseFrequency="0.016" numOctaves="6" seed="11"/>
<feColorMatrix type="matrix" values="0.09 0 0 0 -0.012  0.09 0 0 0 -0.012  0.09 0 0 0 -0.012  0 0 0 0 1"/>
</filter>
<filter id="fCl" x="0" y="0" width="100%" height="100%" color-interpolation-filters="sRGB">
<feGaussianBlur in="SourceGraphic" stdDeviation="6" result="D"/>
<feTurbulence type="fractalNoise" baseFrequency="0.022" numOctaves="5" seed="5"/>
<feColorMatrix type="matrix" values="1 0 0 0 0  1 0 0 0 0  1 0 0 0 0  0 0 0 0 1" result="N"/>
<feComposite in="D" in2="N" operator="arithmetic" k1="0" k2="1.1" k3="1.2" k4="-0.92" result="V"/>
<feColorMatrix in="V" type="matrix" values="1 0 0 0 0  1 0 0 0 0  1 0 0 0 0  5 0 0 0 0" result="A"/>
<feTurbulence type="fractalNoise" baseFrequency="0.075" numOctaves="3" seed="9"/>
<feColorMatrix type="matrix" values="0 1 0 0 0  0 1 0 0 0  0 1 0 0 0  0 0 0 0 1" result="N2"/>
<feComposite in="V" in2="N2" operator="arithmetic" k1="0" k2="0.5" k3="1.1" k4="-0.22" result="C"/>
<feComposite in="C" in2="A" operator="in"/>
</filter>
<filter id="fSc" x="0" y="0" width="100%" height="100%" color-interpolation-filters="sRGB">
<feGaussianBlur in="SourceGraphic" stdDeviation="14" result="D"/>
<feTurbulence type="fractalNoise" baseFrequency="0.042" numOctaves="4" seed="21"/>
<feColorMatrix type="matrix" values="1 0 0 0 0  1 0 0 0 0  1 0 0 0 0  0 0 0 0 1" result="N"/>
<feComposite in="D" in2="N" operator="arithmetic" k1="0" k2="1" k3="1.4" k4="-1.5" result="V"/>
<feColorMatrix in="V" type="matrix" values="1.3 0 0 0 0.27  1.3 0 0 0 0.27  1.3 0 0 0 0.27  6 0 0 0 0"/>
</filter>
<linearGradient id="gBand" gradientUnits="userSpaceOnUse" x1="0" y1="0" x2="120" y2="0"><stop offset="0" stop-color="#fff"/><stop offset="0.35" stop-color="#b4b4b4"/><stop offset="0.7" stop-color="#808080"/><stop offset="1" stop-color="#606060"/></linearGradient>
<radialGradient id="gSc" gradientUnits="userSpaceOnUse" cx="780" cy="640" r="340"><stop offset="0" stop-color="#dcdcdc"/><stop offset="0.5" stop-color="#c4c4c4"/><stop offset="0.8" stop-color="#909090"/><stop offset="1" stop-color="#000"/></radialGradient>
<filter id="fBlur" color-interpolation-filters="sRGB"><feGaussianBlur stdDeviation="2.2"/></filter>
<filter id="fBlur2" x="-30%" y="-30%" width="160%" height="160%" color-interpolation-filters="sRGB"><feGaussianBlur stdDeviation="15"/></filter>
<clipPath id="cMap"><rect width="744" height="744"/></clipPath><clipPath id="cBand"><rect width="210" height="744"/></clipPath><clipPath id="cSc"><rect x="420" y="230" width="324" height="514"/></clipPath>
</defs>
<rect width="744" height="744" fill="#0c0c0c"/>
<g clip-path="url(#cMap)">
<path d="M560 -10 L640 -10 L630 50 L608 106 L578 164 L578 222 L560 262 L535 300 L500 335 L486 300 L488 262 L473 222 L506 164 L515 106 L546 47 Z" fill="#202020" filter="url(#fBlur2)"/>
<rect width="744" height="744" filter="url(#fTer)" style="mix-blend-mode:screen"/>
<g clip-path="url(#cBand)"><g filter="url(#fCl)"><rect width="744" height="744" fill="#000"/>
<path fill="url(#gBand)" d="M-30 -30 L230 -30 L200 60 L170 150 L140 230 L113 288 L87 326 L72 363 L65 408 L72 453 L102 513 L95 558 L80 610 L87 663 L72 707 L61 760 L-30 760 Z"/></g></g>
<g clip-path="url(#cSc)"><g filter="url(#fSc)"><rect width="744" height="744" fill="#000"/>
<rect x="380" y="260" width="400" height="520" fill="url(#gSc)"/>
<ellipse cx="732" cy="322" rx="26" ry="30" fill="#c8c8c8"/>
</g></g>
<g filter="url(#fBlur)" fill="#dedede">
<ellipse cx="581" cy="513" rx="8" ry="8" fill="#fff"/>
<ellipse cx="706" cy="102" rx="5" ry="15" transform="rotate(8 706 102)"/>
<ellipse cx="712" cy="118" rx="5" ry="6"/>
<ellipse cx="698" cy="141" rx="8" ry="5" transform="rotate(-30 698 141)"/>
<path d="M668 160q12-2 14 10q0 8-6 12q2-10-8-22z"/>
<ellipse cx="655" cy="207" rx="6" ry="6" opacity=".8"/>
<ellipse cx="642" cy="229" rx="6" ry="4.500" opacity=".85"/>
<ellipse cx="646" cy="269" rx="3" ry="8" opacity=".8" transform="rotate(15 646 269)"/>
<ellipse cx="640" cy="296" rx="5" ry="4" opacity=".7"/>
<ellipse cx="738" cy="269" rx="9" ry="12" opacity=".55"/>
<ellipse cx="375" cy="500" rx="6" ry="7" opacity=".5"/>
<ellipse cx="370" cy="515" rx="4" ry="5" opacity=".4"/>
<ellipse cx="525" cy="483" rx="4" ry="6" opacity=".5"/>
<ellipse cx="491" cy="629" rx="8" ry="5" opacity=".55"/>
<ellipse cx="484" cy="674" rx="5" ry="7" opacity=".5"/>
<ellipse cx="342" cy="704" rx="5" ry="4" opacity=".3"/>
<ellipse cx="203" cy="45" rx="4" ry="3" opacity=".35"/>
</g>
</g>
</svg>
<span class="t" style="left:2.30px;top:209.80px;font-size:15.0px;color:#000;letter-spacing:0.236px;">Navegador</span>
<svg style="left:0px;top:230px" width="180" height="28" viewBox="0 230 180 28"><rect x="8.800" y="236.800" width="11" height="11" fill="#f6f6f6" stroke="#6f6f6f" stroke-width="1"/><circle cx="19" cy="247.800" r="2.800" fill="#93d493" stroke="#4f9a4f" stroke-width="1"/><path d="M34 242.500a6.300 6.300 0 0 1 10.800-4.200l1.800-1.800v5.600h-5.600l1.900-1.900a3.600 3.600 0 0 0-6.100 2.300zM46.400 243.500a6.300 6.300 0 0 1-10.800 4.200l-1.800 1.800v-5.600h5.600l-1.900 1.900a3.600 3.600 0 0 0 6.100-2.300z" fill="#4a86cf" stroke="#3a6fb4" stroke-width=".5"/><path d="M58.2 238.0h13.600l-5.200 6.400v6.400l-3.200-1.600v-4.800z" fill="#6d97c4" stroke="#5580b0" stroke-width=".6"/><rect x="58.0" y="235.6" width="14" height="2.200" rx=".8" fill="#f2d84a" stroke="#c9b23a" stroke-width=".5"/><path d="M84.500 238v10.500h3M84.500 241.800h3M83.500 237.800h4" fill="none" stroke="#9a9a9a" stroke-width=".8"/><rect x="87.300" y="240.300" width="2.800" height="2.800" fill="#f5a623" stroke="#d98a12" stroke-width=".5"/><rect x="87.300" y="246.400" width="2.800" height="2.800" fill="#f5a623" stroke="#d98a12" stroke-width=".5"/><path d="M93.200 235.200l5 5.400h-3.200v8.200h-3.600v-8.200h-3.200z" fill="#44699a" stroke="#2f4f78" stroke-width=".6"/><circle cx="115" cy="243" r="6.8" fill="#5b8cc4"/><path d="M115.2 239a1.100 1.100 0 1 0 2.200 0a1.100 1.100 0 1 0-2.200 0zM113.2 241.4h3l-1.300 5h1.300l-.2 1h-3.300l1.300-5h-1z" fill="#fff"/></svg>
<div style="position:absolute;left:0px;top:259px;width:617px;height:348px;background:#fff;border-top:1px solid #a6a6a6;border-right:1px solid #a6a6a6"></div>
<div style="position:absolute;left:0px;top:568px;width:616px;height:22px;background:#0078d7"></div>
<div style="position:absolute;left:0px;top:607px;width:616px;height:18px;background:linear-gradient(#fdfdfd,#f3f3f3);border-top:1px solid #c4c4c4;border-bottom:1px solid #b4b4b4"></div>
<div style="position:absolute;left:0px;top:608px;width:16px;height:16px;background:#f0f0f0"></div>
<div style="position:absolute;left:16px;top:608px;width:1px;height:16px;background:#c8c8c8"></div>
<svg style="left:5px;top:611px" width="6" height="10" viewBox="0 0 6 10"><path d="M5.5 0.5v9L0.5 5z" fill="#505050"/></svg>
<svg style="left:120px;top:260px" width="60" height="62" viewBox="120 260 60 62"><path d="M133.200 268.400h8.800l-4.400 4.800z" fill="#505050"/><path d="M154.500 262.600h9.300l2.200 2.400h5.600v3.200h-17.100z" fill="#8c8c8c"/><path d="M154.500 279v-11.500h8.400l2.200-2h6.500v13.500z" fill="#f2f2f2" stroke="#8c8c8c" stroke-width="1" stroke-linejoin="round"/><path d="M160 288.400v9l5-4.500z" fill="#505050"/><path d="M158 312.200h9l-4.500 5z" fill="#505050"/></svg>
<span class="t" style="left:2.30px;top:633.30px;font-size:15.0px;color:#000;letter-spacing:-0.435px;">Capas</span>
<svg style="left:0px;top:655px" width="179" height="22" viewBox="0 655 179 22"><path d="M21.800 660l-6 8.200l-1.800-1.300l5.800-8z" fill="#e8a33d" stroke="#c4832a" stroke-width=".5"/><path d="M8.400 667.500l4.600-4.300l5.800 3.600l-3.400 5.400z" fill="#f2d23a"/><path d="M8.400 667.500l3-2.800l5.200 3.200l-2 3.200z" fill="#4a78c4"/><path d="M8.400 667.500l1.600 2.200l5.400 2.500l1.200-1.900z" fill="#e0473e"/><g fill="#f2f2f2" stroke="#8a8a8a" stroke-width=".9"><path d="M33.500 668v4.500h9"/><path d="M35.500 662.500h9v8.500h-9z"/><path d="M38 660.500h6.500v9.500h-6.500z"/><path d="M39.800 660.500v-1.600h2.800v1.600" fill="none"/></g><path d="M40 664v4.500M42.400 664v4.500" stroke="#6f87a8" stroke-width=".9"/><circle cx="44.600" cy="670.600" r="2.700" fill="#a6e0a6" stroke="#57a857" stroke-width=".9"/><path d="M58.400 665.500q6.600-6.600 13.400 0q-6.800 6.400-13.400 0z" fill="#e9eef6" stroke="#8d99aa" stroke-width=".8"/><path d="M59.500 663q5.600-4.600 11.400-.6" fill="none" stroke="#a5afbd" stroke-width=".8"/><circle cx="65" cy="665.300" r="2.900" fill="#5d86bf"/><circle cx="65" cy="665.300" r="1.300" fill="#1d2c46"/><path d="M67.800 669h7l-3.500 4.400z" fill="#444"/><path d="M83.2 660.6h13.600l-5.200 6.400v6.400l-3.200-1.600v-4.800z" fill="#6d97c4" stroke="#5580b0" stroke-width=".6"/><rect x="83.0" y="658.2" width="14" height="2.200" rx=".8" fill="#f2d84a" stroke="#c9b23a" stroke-width=".5"/><text x="108.500" y="669" font-family="'Liberation Serif',serif" font-size="17" fill="#c6c6c6">ε</text><path d="M117.500 668.500h5.500v4.800l-1.400-1.400l-1.300 1.400l-1.400-1.400l-1.400 1.400z" fill="#e2e2e2"/><path d="M130 664.200h9l-4.500 5z" fill="#a8a8a8"/><path d="M149 660v11.500h3M149 664.800h3M148 659.800h4" fill="none" stroke="#9a9a9a" stroke-width=".8"/><rect x="151.8" y="663.300" width="2.900" height="2.900" fill="#f5a623" stroke="#d98a12" stroke-width=".5"/><rect x="151.8" y="669.700" width="2.900" height="2.900" fill="#f5a623" stroke="#d98a12" stroke-width=".5"/><path d="M158.200 673l5-5.400h-3.200v-8.400h-3.600v8.400h-3.200z" fill="#4d7fc0" stroke="#3a66a2" stroke-width=".6"/><path d="M175 660v11.500h3M175 664.800h3M174 659.800h4" fill="none" stroke="#9a9a9a" stroke-width=".8"/><rect x="177.8" y="663.300" width="2.900" height="2.900" fill="#f5a623" stroke="#d98a12" stroke-width=".5"/><rect x="177.8" y="669.700" width="2.900" height="2.900" fill="#f5a623" stroke="#d98a12" stroke-width=".5"/></svg>
<div style="position:absolute;left:0px;top:682px;width:617px;height:314px;background:#fff;border-top:1px solid #a6a6a6;border-right:1px solid #a6a6a6"></div>
<div style="position:absolute;left:0px;top:683px;width:616px;height:22px;background:#efefef"></div>
<svg style="left:0px;top:683px" width="179" height="50" viewBox="0 683 179 50"><path d="M8.300 691.400h8.800l-4.400 4.800z" fill="#505050"/><rect x="28.500" y="686.500" width="16" height="16" fill="#fff" stroke="#bdbdbd" stroke-width="1"/><path d="M31.500 693.800l3.600 5.400q2.400-7.400 6.400-11" fill="none" stroke="#000" stroke-width="1.900"/><rect x="53.0" y="686.4" width="5.700" height="5.400" fill="#1f5f9b"/><rect x="58.7" y="686.4" width="5.700" height="5.400" fill="#8cc4ee"/><rect x="64.4" y="686.4" width="5.700" height="5.400" fill="#1f5f9b"/><rect x="53.0" y="691.8" width="5.700" height="5.400" fill="#5aa0dc"/><rect x="58.7" y="691.8" width="5.700" height="5.400" fill="#1f5f9b"/><rect x="64.4" y="691.8" width="5.700" height="5.400" fill="#8cc4ee"/><rect x="53.0" y="697.2" width="5.700" height="5.400" fill="#1f5f9b"/><rect x="58.7" y="697.2" width="5.700" height="5.400" fill="#5aa0dc"/><rect x="64.4" y="697.2" width="5.700" height="5.400" fill="#ffffff"/><rect x="53" y="708" width="17" height="17" fill="#000"/></svg>
<span class="t" style="left:76.60px;top:684.40px;font-size:15px;color:#000;letter-spacing:0.206px;font-weight:bold;text-decoration:underline;text-decoration-thickness:1.3px;text-underline-offset:1.5px;">T17MQV_2018</span>
<span class="t" style="left:76.30px;top:706.80px;font-size:15.0px;color:#000;letter-spacing:-0.653px;">141</span>
<span class="t" style="left:76.30px;top:728.80px;font-size:15.0px;color:#000;letter-spacing:-0.047px;">11949</span>
<div style="position:absolute;left:0px;top:996px;width:1919px;height:33px;background:#f0f0f0;border-top:1px solid #c4c4c4"></div>
<div style="position:absolute;left:3px;top:1002px;width:306px;height:22px;background:#fff;border:1px solid #adadad;border-radius:2px"></div>
<svg style="left:11px;top:1006px" width="14" height="14" viewBox="0 0 14 14"><circle cx="5.2" cy="5.2" r="3.9" fill="none" stroke="#8a8a8a" stroke-width="1.3"/><path d="M8.2 8.2L12.3 12.3" stroke="#8a8a8a" stroke-width="1.8" stroke-linecap="round"/></svg>
<span class="t" style="left:31.37px;top:1003.79px;font-size:13.6px;color:#7a7a7a;letter-spacing:-0.284px;">Escriba para localizar (Ctrl+K)</span>
<span class="t" style="left:317.38px;top:1004.43px;font-size:13.2px;color:#000;letter-spacing:-0.160px;">Preparado</span>
<span class="t" style="left:947.38px;top:1004.43px;font-size:13.2px;color:#000;letter-spacing:-0.301px;">Coordenada</span>
<div style="position:absolute;left:1021px;top:1002px;width:111px;height:22px;background:#fff;border:1px solid #adadad;border-radius:2px"></div>
<span class="t" style="left:1028.38px;top:1004.43px;font-size:13.2px;color:#000;letter-spacing:-0.280px;">703477,9999264</span>
<span class="t" style="left:1168.38px;top:1004.43px;font-size:13.2px;color:#000;letter-spacing:-0.520px;">Escala</span>
<div style="position:absolute;left:1208px;top:1002px;width:93px;height:22px;background:#fff;border:1px solid #adadad;border-radius:2px"></div>
<div style="position:absolute;left:1275px;top:1003px;width:25px;height:20px;background:#f3f3f3"></div>
<svg style="left:1280px;top:1010px" width="10" height="6" viewBox="0 0 10 6"><path d="M0.5 0.5h9L5 5.5z" fill="#505050"/></svg>
<span class="t" style="left:1211.38px;top:1004.43px;font-size:13.2px;color:#000;letter-spacing:0.029px;">1:697976</span>
<span class="t" style="left:1337.78px;top:1004.43px;font-size:13.2px;color:#000;letter-spacing:-0.081px;">Amplificador</span>
<svg style="left:1130px;top:997px" width="789" height="32" viewBox="1130 997 789 32"><g fill="none" stroke="#333" stroke-width="1.100"><path d="M1139 1007.500q3.500-3.500 7.500-.5l4.500 7.500q1.500 4-2 6q-4 1.500-6.500-1.500l-4.500-7.500q-1.500-3 1-4z" fill="#f4f4f4"/><path d="M1140 1013l8.500-5M1143.500 1006.500l3 5"/><circle cx="1147.500" cy="1017.500" r="1.600"/></g><path d="M1138 1005l2 2M1136.800 1008.500l2.200 1M1151 1006.500l1.500-1.500M1153 1004.500l.8-.8" stroke="#333" stroke-width=".9"/><path d="M1315.800 1012v-3.200a4.900 4.900 0 0 1 9.800 0v3.200" fill="none" stroke="#8a8a8a" stroke-width="1.800"/><rect x="1312.800" y="1011.500" width="16" height="11" rx="1.600" fill="#7a7a7a"/><rect x="1412.5" y="1002.5" width="92" height="21.5" rx="2.500" fill="#fff" stroke="#b5b5b5" stroke-width=".9"/><path d="M1487.0 1003.0h15.0q2 0 2 2v16.5q0 2-2 2h-15.0z" fill="#f6f6f6"/><path d="M1487.0 1003.0v20.5" stroke="#c4c4c4" stroke-width=".9"/><path d="M1491.25 1011.5h9l-4.500-5z" fill="#5a5a5a"/><path d="M1491.25 1015.0h9l-4.500 5z" fill="#5a5a5a"/><rect x="1572.5" y="1002.5" width="88" height="21.5" rx="2.500" fill="#fff" stroke="#b5b5b5" stroke-width=".9"/><path d="M1643.0 1003.0h15.0q2 0 2 2v16.5q0 2-2 2h-15.0z" fill="#f6f6f6"/><path d="M1643.0 1003.0v20.5" stroke="#c4c4c4" stroke-width=".9"/><path d="M1647.25 1011.5h9l-4.500-5z" fill="#5a5a5a"/><path d="M1647.25 1015.0h9l-4.500 5z" fill="#5a5a5a"/><rect x="1667.800" y="1004.500" width="15.600" height="15.600" fill="#fff" stroke="#bdbdbd" stroke-width="1"/><path d="M1670.800 1011.600l3.500 5.300q2.300-7.200 6.200-10.700" fill="none" stroke="#000" stroke-width="1.900"/><g fill="none" stroke="#6e6e6e" stroke-width="1.100"><path d="M1777.800 1011.500l3.800-5.200q5.600-2.200 11.200 0l3.800 5.200q-3 6.600-9.400 9.400q-6.400-2.800-9.400-9.400z"/><path d="M1777.800 1011.500q9.400 2.600 18.800 0M1780.600 1016q6.600 2 13.200 0M1781.600 1006.300q5.600 1.600 11.200 0M1787.200 1005v15.900M1783 1005.600q-1.600 7.500 1.400 13.600M1791.400 1005.600q1.600 7.500-1.400 13.600"/></g><path d="M1902 1004.500c5.500 0 9.800 3.400 9.800 7.800c0 2.600-1.500 4.800-3.800 6.200q.6 2.600 2.800 4.200q-4.200.2-6.400-2.800q-1.200.2-2.400.2c-5.500 0-9.800-3.400-9.800-7.800s4.300-7.800 9.800-7.800z" fill="#6e6e6e"/><circle cx="1897.400" cy="1012.400" r="1.400" fill="#fff"/><circle cx="1902" cy="1012.400" r="1.400" fill="#fff"/><circle cx="1906.600" cy="1012.400" r="1.400" fill="#fff"/></svg>
<span class="t" style="left:1416.38px;top:1004.43px;font-size:13.2px;color:#000;letter-spacing:0.085px;">100%</span>
<span class="t" style="left:1576.58px;top:1004.43px;font-size:13.2px;color:#000;letter-spacing:0.433px;">0,0 °</span>
<span class="t" style="left:1513.38px;top:1004.43px;font-size:13.2px;color:#000;letter-spacing:-0.377px;">Rotación</span>
<span class="t" style="left:1689.38px;top:1003.93px;font-size:13.2px;color:#000;letter-spacing:-0.223px;">Representar</span>
<span class="t" style="left:1800.98px;top:1004.43px;font-size:13.2px;color:#000;letter-spacing:-0.669px;">EPSG:32717</span>
<div style="position:absolute;left:179px;top:53px;width:571px;height:738px;background:#fff;border:1px solid #a0a0a0;box-shadow:3px 3px 3px rgba(0,0,0,.5)"></div>
<span class="t" style="left:211.30px;top:57.50px;font-size:15.0px;color:#000;letter-spacing:0.080px;">Administrador de fuentes de <u>d</u>atos</span>
<span class="t" style="left:211.30px;top:85.50px;font-size:15.0px;color:#000;letter-spacing:-0.221px;">Crear capa</span>
<svg style="left:738px;top:90px" width="6" height="10" viewBox="0 0 6 10"><path d="M0.5 0.5v9L5.5 5z" fill="#505050"/></svg>
<div style="position:absolute;left:180px;top:109px;width:569px;height:28px;background:#0078d7"></div>
<span class="t" style="left:211.30px;top:113.50px;font-size:15.0px;color:#fff;letter-spacing:0.099px;">Añadir capa</span>
<svg style="left:738px;top:118px" width="6" height="10" viewBox="0 0 6 10"><path d="M0.5 0.5v9L5.5 5z" fill="#fff"/></svg>
<span class="t" style="left:211.30px;top:141.50px;font-size:15.0px;color:#000;letter-spacing:-0.196px;">Empotrar capas y grupos...</span>
<span class="t" style="left:211.30px;top:169.50px;font-size:15.0px;color:#000;letter-spacing:-0.022px;">Añadir desde archivo de definición de capa...</span>
<div style="position:absolute;left:185px;top:193px;width:559px;height:1px;background:#c8c8c8"></div>
<span class="t" style="left:211.30px;top:199.50px;font-size:15.0px;color:#000;letter-spacing:0.138px;">Copiar estilo</span>
<span class="t" style="left:211.30px;top:227.50px;font-size:15.0px;color:#6d6d6d;letter-spacing:-0.132px;">Pegar estilo</span>
<div style="position:absolute;left:185px;top:251px;width:559px;height:1px;background:#c8c8c8"></div>
<span class="t" style="left:211.30px;top:257.50px;font-size:15.0px;color:#000;letter-spacing:0.020px;">Copiar capa</span>
<span class="t" style="left:211.30px;top:285.50px;font-size:15.0px;color:#6d6d6d;letter-spacing:0.054px;">Pegar capa/grupo</span>
<div style="position:absolute;left:185px;top:309px;width:559px;height:1px;background:#c8c8c8"></div>
<span class="t" style="left:211.30px;top:315.50px;font-size:15.0px;color:#6d6d6d;letter-spacing:0.220px;">Abrir tabla de <u>a</u>tributos</span>
<span class="t" style="left:581.30px;top:315.50px;font-size:15.0px;color:#6d6d6d;letter-spacing:-0.944px;">F6</span>
<span class="t" style="left:211.30px;top:343.50px;font-size:15.0px;color:#6d6d6d;letter-spacing:0.119px;">Conmutar edición</span>
<span class="t" style="left:211.30px;top:371.50px;font-size:15.0px;color:#6d6d6d;letter-spacing:-0.068px;">Guardar cambios de la capa</span>
<span class="t" style="left:211.30px;top:399.50px;font-size:15.0px;color:#6d6d6d;letter-spacing:-0.170px;">Ediciones actuales</span>
<svg style="left:738px;top:404px" width="6" height="10" viewBox="0 0 6 10"><path d="M0.5 0.5v9L5.5 5z" fill="#a8a8a8"/></svg>
<div style="position:absolute;left:185px;top:423px;width:559px;height:1px;background:#c8c8c8"></div>
<span class="t" style="left:211.30px;top:429.50px;font-size:15.0px;color:#000;letter-spacing:-0.227px;">G<u>u</u>ardar como...</span>
<span class="t" style="left:211.30px;top:457.50px;font-size:15.0px;color:#000;letter-spacing:-0.039px;">Guardar como archivo de definición de capa...</span>
<span class="t" style="left:211.30px;top:485.50px;font-size:15.0px;color:#000;letter-spacing:0.178px;">Eliminar capa/grupo</span>
<span class="t" style="left:581.30px;top:485.50px;font-size:15.0px;color:#000;letter-spacing:0.150px;">Control+E</span>
<span class="t" style="left:211.30px;top:513.50px;font-size:15.0px;color:#000;letter-spacing:-0.033px;">Duplicar capa(s)</span>
<span class="t" style="left:211.30px;top:541.50px;font-size:15.0px;color:#000;letter-spacing:-0.089px;">Establecer visibilidad de escala de capa(s)</span>
<span class="t" style="left:211.30px;top:569.50px;font-size:15.0px;color:#000;letter-spacing:-0.360px;">Establecer SRC de la capa(s)</span>
<span class="t" style="left:581.30px;top:569.50px;font-size:15.0px;color:#000;letter-spacing:-0.077px;">Control+Mayúsculas+C</span>
<span class="t" style="left:211.30px;top:597.50px;font-size:15.0px;color:#000;letter-spacing:-0.122px;">Establecer SRC del proyecto a partir de capa</span>
<span class="t" style="left:211.30px;top:625.50px;font-size:15.0px;color:#000;letter-spacing:-0.265px;">Layer <u>P</u>roperties...</span>
<span class="t" style="left:211.30px;top:653.50px;font-size:15.0px;color:#6d6d6d;letter-spacing:-0.202px;">Filtrar...</span>
<span class="t" style="left:581.30px;top:653.50px;font-size:15.0px;color:#6d6d6d;letter-spacing:0.132px;">Control+F</span>
<span class="t" style="left:211.30px;top:681.50px;font-size:15.0px;color:#6d6d6d;letter-spacing:0.207px;">Etiquetado</span>
<div style="position:absolute;left:185px;top:705px;width:559px;height:1px;background:#c8c8c8"></div>
<span class="t" style="left:211.30px;top:711.50px;font-size:15.0px;color:#000;letter-spacing:-0.160px;">Mostrar en Vista General</span>
<span class="t" style="left:211.30px;top:739.50px;font-size:15.0px;color:#000;letter-spacing:-0.087px;">Mostrar Todo en Vista General</span>
<span class="t" style="left:211.30px;top:767.50px;font-size:15.0px;color:#000;letter-spacing:-0.095px;">Ocultar Todo en Vista General</span>
<svg style="left:179px;top:53px" width="572" height="740" viewBox="179 53 572 740"><g transform="translate(186 57.2) scale(0.83)"><path d="M0 9l8.6-4.8l5.4 12.6l-9.2 4.6z" fill="#e8762d"/><path d="M3.6 3.9l11.2-.6l1 14l-10 .8z" fill="#f6c22d"/><path d="M10.4 0l13.4 3.2l-2.8 11l-13-1z" fill="#6d97c4" stroke="#3f6a99" stroke-width=".9" stroke-linejoin="round"/><g transform="translate(15.2 15) scale(0.9777777777777779)"><rect x="0" y="0" width="9" height="9" rx="2" fill="#5a9a52"/><path d="M4.5 1.8v5.4M1.8 4.5h5.4" stroke="#fff" stroke-width="1.7"/></g></g><path d="M194.300 200.5h5.200l3.300 3.300v9.700h-8.500z" fill="#f4f4f4" stroke="#b4b4b4" stroke-width=".8"/><path d="M199.500 200.5v3.300h3.300" fill="none" stroke="#b4b4b4" stroke-width=".8"/><path d="M189.800 204.5h6.200l3.300 3.300v9.700h-9.500z" fill="#ececec" stroke="#646464" stroke-width="1"/><path d="M196 204.5v3.300h3.300" fill="none" stroke="#646464" stroke-width=".9"/><path d="M191.500 209.5h4M191.500 211.5h6M191.500 213.5h6M191.500 215.5h6" stroke="#6c6c6c" stroke-width=".9"/><g opacity=".8"><rect x="189.600" y="228.5" width="13" height="16.500" rx="1.200" fill="#ebebeb" stroke="#dcdcdc" stroke-width=".8"/><rect x="193.200" y="227.5" width="5.800" height="2.400" fill="#e0e0e0"/><path d="M192 231h5.500l2.700 2.700v9.300h-8.200z" fill="#f8f8f8" stroke="#dedede" stroke-width=".7"/><path d="M193.500 236h4M193.500 238h5M193.500 240h5" stroke="#e0e0e0" stroke-width=".8"/></g><path d="M194.300 258.5h5.200l3.300 3.300v9.700h-8.500z" fill="#f4f4f4" stroke="#b4b4b4" stroke-width=".8"/><path d="M199.500 258.5v3.300h3.300" fill="none" stroke="#b4b4b4" stroke-width=".8"/><path d="M189.800 262.5h6.200l3.300 3.300v9.700h-9.500z" fill="#ececec" stroke="#646464" stroke-width="1"/><path d="M196 262.5v3.300h3.300" fill="none" stroke="#646464" stroke-width=".9"/><path d="M191.500 267.5h4M191.500 269.5h6M191.500 271.5h6M191.500 273.5h6" stroke="#6c6c6c" stroke-width=".9"/><g opacity=".8"><rect x="189.600" y="286.5" width="13" height="16.500" rx="1.200" fill="#ebebeb" stroke="#dcdcdc" stroke-width=".8"/><rect x="193.200" y="285.5" width="5.800" height="2.400" fill="#e0e0e0"/><path d="M192 289h5.500l2.700 2.700v9.300h-8.200z" fill="#f8f8f8" stroke="#dedede" stroke-width=".7"/><path d="M193.500 294h4M193.500 296h5M193.500 298h5" stroke="#e0e0e0" stroke-width=".8"/></g><g opacity=".75"><rect x="187.800" y="317" width="16.400" height="15.600" fill="#f2f2f2" stroke="#dedede" stroke-width=".8"/><rect x="187.800" y="317" width="16.400" height="3.400" fill="#e2e2e2"/><path d="M187.800 323.500h16.400M187.800 326.500h16.400M187.800 329.500h16.400M193 317v15.600" stroke="#e2e2e2" stroke-width=".8"/></g><path d="M190 361.700l1-4.200l9-12.200l2.600 1.900l-9 12.200z" fill="#e4e4e4" stroke="#dadada" stroke-width=".6"/><g opacity=".8"><rect x="188" y="373" width="15.500" height="15.500" rx="1.500" fill="#e2e2e2"/><rect x="190.500" y="374" width="10.500" height="5.500" fill="#f6f6f6"/><rect x="191" y="383" width="9" height="5.500" fill="#f2f2f2"/><path d="M196.500 389.600l.8-3.400l6.500-8l2.200 1.700l-6.500 8z" fill="#dedede" stroke="#f4f4f4" stroke-width=".5"/></g><path d="M188 418.700l1-4.200l7.500-12.800l2.600 1.500l-7.500 12.800z" fill="#e2e2e2"/><path d="M191.500 418.700l1-4.200l8-13.800l2.600 1.500l-8 13.800z" fill="#dcdcdc"/><path d="M195.500 416.700l.8-3.600l6.500-11l2.400 1.400l-6.500 11z" fill="#e4e4e4"/><rect x="188" y="486.900" width="13.600" height="13.400" fill="#ececec" stroke="#8c8c8c" stroke-width="1"/><rect x="197" y="497.200" width="7.900" height="6.500" rx="2.200" fill="#e0565b"/><path d="M198.600 500.500h4.700" stroke="#fff" stroke-width="1.500"/><path d="M187.600 517h3v12h9.500v2.600h-12.500z" fill="#8a8a8a" stroke="#6f6f6f" stroke-width=".6"/><rect x="190.600" y="514.800" width="13.600" height="14" fill="#ececec" stroke="#9a9a9a" stroke-width="1"/><g transform="translate(197.3 524) scale(0.8444444444444444)"><rect x="0" y="0" width="9" height="9" rx="1.8" fill="#d9b51c"/><rect x="0.8" y="0.8" width="7.4" height="7.4" rx="1.2" fill="#ecd04a"/><path d="M4.5 1.3v6.4M1.3 4.5h6.4M2.2 2.2l4.6 4.6M6.8 2.2l-4.6 4.6" stroke="#fffdf0" stroke-width="1.1"/></g><path d="M186.400 688.700l3.400-4.200h13.400v8.400h-13.400z" fill="#e6e6e3" stroke="#dadad6" stroke-width=".6"/><text x="190" y="691.300" font-family="'Liberation Serif',serif" font-size="7.500" fill="#bdbdbd" font-weight="bold">abc</text><path d="M186.600 713.9q4.500-1.400 9.700.1q5.200-1.500 9.700-.1" fill="none" stroke="#111" stroke-width="1.900"/><path d="M187.400 714.2q.2 5.600 4.400 5.600q3.600 0 4.300-5.200M196.500 714.6q.7 5.200 4.300 5.200q4.200 0 4.400-5.600" fill="none" stroke="#111" stroke-width="1.300"/><g transform="translate(197.8 723) scale(0.9222222222222223)"><rect x="0" y="0" width="9" height="9" rx="2" fill="#5a9a52"/><path d="M4.5 1.8v5.4M1.8 4.5h5.4" stroke="#fff" stroke-width="1.7"/></g><path d="M186.600 746.3q4.500-1.400 9.700.1q5.200-1.500 9.700-.1" fill="none" stroke="#111" stroke-width="1.900"/><path d="M187.400 746.6q.2 5.600 4.400 5.600q3.600 0 4.300-5.200M196.500 747.0q.7 5.200 4.300 5.200q4.200 0 4.400-5.600" fill="none" stroke="#111" stroke-width="1.300"/><path d="M186.600 769.9q4.500-1.400 9.700.1q5.200-1.500 9.700-.1" fill="none" stroke="#111" stroke-width="1.900"/><path d="M187.400 770.2q.2 5.600 4.400 5.600q3.600 0 4.300-5.200M196.500 770.6q.7 5.200 4.300 5.200q4.200 0 4.400-5.600" fill="none" stroke="#111" stroke-width="1.300"/><g transform="translate(197.8 778.6) scale(0.8300000000000001)"><rect x="0" y="0" width="10" height="10" rx="2" fill="#dd4b55"/><circle cx="5" cy="5" r="2.9" fill="none" stroke="#fff" stroke-width="1.3"/><path d="M3 7L7 3" stroke="#fff" stroke-width="1.3"/></g></svg>
<div style="position:absolute;left:750px;top:109px;width:523px;height:392px;background:#fff;border:1px solid #a0a0a0;box-shadow:3px 3px 3px rgba(0,0,0,.5)"></div>
<span class="t" style="left:781.60px;top:113.50px;font-size:15.0px;color:#000;letter-spacing:-0.076px;">Añadir capa vectorial...</span>
<span class="t" style="left:1099.30px;top:113.50px;font-size:15.0px;color:#000;letter-spacing:-0.050px;">Control+Mayúsculas+V</span>
<div style="position:absolute;left:751px;top:137px;width:521px;height:28px;background:#0078d7"></div>
<span class="t" style="left:781.60px;top:141.50px;font-size:15.0px;color:#fff;letter-spacing:-0.168px;">Añadir capa ráster...</span>
<span class="t" style="left:1099.30px;top:141.50px;font-size:15.0px;color:#fff;letter-spacing:-0.093px;">Control+Mayúsculas+R</span>
<span class="t" style="left:781.60px;top:169.50px;font-size:15.0px;color:#000;letter-spacing:0.094px;">Añadir capa de texto delimitado...</span>
<span class="t" style="left:781.60px;top:197.50px;font-size:15.0px;color:#000;letter-spacing:-0.519px;">Añadir capas PostGIS...</span>
<span class="t" style="left:1099.30px;top:197.50px;font-size:15.0px;color:#000;letter-spacing:-0.011px;">Control+Mayúsculas+D</span>
<span class="t" style="left:781.60px;top:225.50px;font-size:15.0px;color:#000;letter-spacing:-0.105px;">Añadir capa SpatialLite...</span>
<span class="t" style="left:1099.30px;top:225.50px;font-size:15.0px;color:#000;letter-spacing:-0.052px;">Control+Mayúsculas+L</span>
<span class="t" style="left:781.60px;top:253.50px;font-size:15.0px;color:#000;letter-spacing:-0.301px;">Añadir capa espacial de MSSQL...</span>
<span class="t" style="left:1099.30px;top:253.50px;font-size:15.0px;color:#000;letter-spacing:-0.009px;">Control+Mayúsculas+M</span>
<span class="t" style="left:781.60px;top:281.50px;font-size:15.0px;color:#000;letter-spacing:-0.162px;">Añadir capa DB2 Spatial...</span>
<span class="t" style="left:1099.30px;top:281.50px;font-size:15.0px;color:#000;letter-spacing:-0.052px;">Control+Mayúsculas+2</span>
<span class="t" style="left:781.60px;top:309.50px;font-size:15.0px;color:#000;letter-spacing:-0.159px;">Añadir capa espacial de Oracle...</span>
<span class="t" style="left:1099.30px;top:309.50px;font-size:15.0px;color:#000;letter-spacing:-0.050px;">Control+Mayúsculas+V</span>
<span class="t" style="left:781.60px;top:337.50px;font-size:15.0px;color:#000;letter-spacing:-0.010px;">Añadir/Editar capa virtual...</span>
<span class="t" style="left:781.60px;top:365.50px;font-size:15.0px;color:#000;letter-spacing:-0.266px;">Añadir capa WMS/WMTS...</span>
<span class="t" style="left:1099.30px;top:365.50px;font-size:15.0px;color:#000;letter-spacing:-0.027px;">Control+Mayúsculas+W</span>
<span class="t" style="left:781.60px;top:393.50px;font-size:15.0px;color:#000;letter-spacing:-0.276px;">Añadir capa MapServer de Arc<u>G</u>IS...</span>
<span class="t" style="left:781.60px;top:421.50px;font-size:15.0px;color:#000;letter-spacing:-0.375px;">Agregar capa WCS...</span>
<span class="t" style="left:781.60px;top:449.50px;font-size:15.0px;color:#000;letter-spacing:-0.438px;">Añadir capa WFS...</span>
<span class="t" style="left:781.60px;top:477.50px;font-size:15.0px;color:#000;letter-spacing:-0.340px;">Añadir capa FeatureServer de Arc<u>G</u>IS...</span>
<svg style="left:750px;top:109px" width="524" height="394" viewBox="750 109 524 394"><g transform="translate(757 113.7) scale(0.88)"><path d="M0.6 2.2L7 17M13.6 2.2L7 17M13.6 2.2h6" fill="none" stroke="#333" stroke-width="1.2"/><g fill="#fff" stroke="#333" stroke-width=".9"><path d="M0.6 .4l1.7 1.8l-1.7 1.8l-1.7-1.8zM13.6 .4l1.7 1.8l-1.7 1.8l-1.7-1.8zM19.8 .6l1.7 1.8l-1.7 1.8l-1.7-1.8z"/><circle cx="7" cy="17" r="1.5"/></g></g><g transform="translate(768.2 125.4) scale(0.8666666666666667)"><rect x="0" y="0" width="9" height="9" rx="2" fill="#5a9a52"/><path d="M4.5 1.8v5.4M1.8 4.5h5.4" stroke="#fff" stroke-width="1.7"/></g><rect x="756.0" y="141.2" width="5.400" height="5.300" fill="#2b3f5c"/><rect x="761.4" y="141.2" width="5.400" height="5.300" fill="#5f86b8"/><rect x="766.8" y="141.2" width="5.400" height="5.300" fill="#2b3f5c"/><rect x="756.0" y="146.5" width="5.400" height="5.300" fill="#5f86b8"/><rect x="761.4" y="146.5" width="5.400" height="5.300" fill="#2b3f5c"/><rect x="766.8" y="146.5" width="5.400" height="5.300" fill="#5f86b8"/><rect x="756.0" y="151.8" width="5.400" height="5.300" fill="#2b3f5c"/><rect x="761.4" y="151.8" width="5.400" height="5.300" fill="#5f86b8"/><rect x="766.8" y="151.8" width="5.400" height="5.300" fill="#86a7d2"/><g transform="translate(768.2 153.4) scale(0.8666666666666667)"><rect x="0" y="0" width="9" height="9" rx="2" fill="#5a9a52"/><path d="M4.5 1.8v5.4M1.8 4.5h5.4" stroke="#fff" stroke-width="1.7"/></g><path d="M760.200 174.5a4.200 4.200 0 1 1 8.200 1.200q-.8 5.200-7.400 8.800l-1.200-1.400q4.200-2.800 4.600-5.600q-3.600.4-4.200-3z" fill="#6d97c4" stroke="#3f6290" stroke-width=".8"/><g transform="translate(768.2 181.4) scale(0.8666666666666667)"><rect x="0" y="0" width="9" height="9" rx="2" fill="#5a9a52"/><path d="M4.5 1.8v5.4M1.8 4.5h5.4" stroke="#fff" stroke-width="1.7"/></g><path d="M757 202q-.8-4.800 3.800-5.200q2.200-1.400 5.200-.6q4.600-.2 5 4.400q.2 3-1.400 5.400q1.800.6 1.400 1.800q-1.600.8-3.200-.2q-.6 3.200-1.400 4.600q-1.400 1.600-3 .2q-.8-1.800-.6-4.600q-2 .4-3.400-1.200q-1.800-1.600-2.400-4.600z" fill="#6d97c4" stroke="#34598a" stroke-width=".9"/><path d="M762.600 199q-1.600 3.200 .4 7.800M766 198.5q2 3.600 .8 8.400" fill="none" stroke="#34598a" stroke-width=".8"/><g transform="translate(768.2 209.4) scale(0.8666666666666667)"><rect x="0" y="0" width="9" height="9" rx="2" fill="#5a9a52"/><path d="M4.5 1.8v5.4M1.8 4.5h5.4" stroke="#fff" stroke-width="1.7"/></g><g transform="translate(756.3 225.2) scale(0.82)"><path d="M22.4 .4q.6 5-3 9.4q-4 4.8-9.4 8.2l-5 .6q-2.6 2.4-4.4 5l-.4-.4q1.8-5 5-10q3.6-5.6 8.8-9.2q4-2.8 8.400-3.600z" fill="#86a9d4" stroke="#3a5f88" stroke-width=".8" stroke-linejoin="round"/><path d="M21.8 1q-9 5-15.600 14.600q-3 4.400-5.200 7.600" fill="none" stroke="#35577f" stroke-width=".9"/><path d="M18 6.500l-6.600 4.200M14.800 10.800l-6 3.400" stroke="#c5d8ef" stroke-width=".8"/></g><g transform="translate(768.2 237.4) scale(0.8666666666666667)"><rect x="0" y="0" width="9" height="9" rx="2" fill="#5a9a52"/><path d="M4.5 1.8v5.4M1.8 4.5h5.4" stroke="#fff" stroke-width="1.7"/></g><path d="M756.600 253.8q10 .6 18.800 8.400q-6.400 2.400-10.400 4.400q-4.400 2.200-8.600 5.200q5.800-8.600 .2-18z" fill="#6d97c4" stroke="#2f5283" stroke-width=".9" stroke-linejoin="round"/><path d="M762 255q4 6.500 .6 13.400M767 257.2q3 4.600 1.400 9.400M771.400 259.6q1.600 2.400 1.200 4.600" fill="none" stroke="#2f5283" stroke-width=".8"/><g transform="translate(768.2 265.4) scale(0.8666666666666667)"><rect x="0" y="0" width="9" height="9" rx="2" fill="#5a9a52"/><path d="M4.5 1.8v5.4M1.8 4.5h5.4" stroke="#fff" stroke-width="1.7"/></g><rect x="756.200" y="280.8" width="15.600" height="16.200" rx="2.600" fill="#6d97c4"/><text x="757.300" y="292.2" font-family="'Liberation Sans',sans-serif" font-size="7.600" fill="#eef3fa" textLength="13.400" lengthAdjust="spacingAndGlyphs">DB2</text><g transform="translate(768.2 293.4) scale(0.8666666666666667)"><rect x="0" y="0" width="9" height="9" rx="2" fill="#5a9a52"/><path d="M4.5 1.8v5.4M1.8 4.5h5.4" stroke="#fff" stroke-width="1.7"/></g><rect x="757.600" y="311.3" width="16" height="10.800" rx="4" fill="#6d97c4" stroke="#2a4d78" stroke-width="1.500"/><g transform="translate(768.2 321.4) scale(0.8666666666666667)"><rect x="0" y="0" width="9" height="9" rx="2" fill="#5a9a52"/><path d="M4.5 1.8v5.4M1.8 4.5h5.4" stroke="#fff" stroke-width="1.7"/></g><rect x="757.400" y="338.5" width="17" height="17" rx="1" fill="#c3d3e6" stroke="#7f93ab" stroke-width=".9"/><path d="M757.800 338.9l16.200 16.200v-16.200z" fill="#d9e4f0" opacity=".7"/><g transform="translate(759.6 340.2) scale(0.62)"><path d="M0.6 2.2L7 17M13.6 2.2L7 17M13.6 2.2h6" fill="none" stroke="#3a4a5e" stroke-width="1.2"/><g fill="#fff" stroke="#3a4a5e" stroke-width=".9"><path d="M0.6 .4l1.7 1.8l-1.7 1.8l-1.7-1.8zM13.6 .4l1.7 1.8l-1.7 1.8l-1.7-1.8zM19.8 .6l1.7 1.8l-1.7 1.8l-1.7-1.8z"/><circle cx="7" cy="17" r="1.5"/></g></g><g transform="translate(768.2 349.4) scale(0.8666666666666667)"><rect x="0" y="0" width="9" height="9" rx="2" fill="#5a9a52"/><path d="M4.5 1.8v5.4M1.8 4.5h5.4" stroke="#fff" stroke-width="1.7"/></g><circle cx="765.6" cy="374.2" r="9.3" fill="#a9c4e4" stroke="#5f86b8" stroke-width=".9"/><path d="M759.1 370.7l3-2.500l2.500 1l-1 3.500l-2.500 2.500l-1.500-1.500zM765.1 369.2l5.500-1.500l2.500 3l-1.500 3l-3-.5l-1 3.500l-2-2.500zM760.6 376.7l3 .5l.5 3.500l-2 1.500zM768.6 376.2l2.500 1l-.5 3l-2 .5z" fill="#3d5f8f"/><path d="M757.3000000000001 372.2q8.3 -3 16.6 0M765.6 364.9q-5 9.3 0 18.6" fill="none" stroke="#dfeaf6" stroke-width=".6"/><g transform="translate(768.2 377.4) scale(0.8666666666666667)"><rect x="0" y="0" width="9" height="9" rx="2" fill="#5a9a52"/><path d="M4.5 1.8v5.4M1.8 4.5h5.4" stroke="#fff" stroke-width="1.7"/></g><circle cx="765.6" cy="402.2" r="9.3" fill="#a9c4e4" stroke="#5f86b8" stroke-width=".9"/><path d="M759.1 398.7l3-2.500l2.500 1l-1 3.500l-2.500 2.500l-1.500-1.500zM765.1 397.2l5.500-1.500l2.500 3l-1.500 3l-3-.5l-1 3.500l-2-2.500zM760.6 404.7l3 .5l.5 3.500l-2 1.500zM768.6 404.2l2.500 1l-.5 3l-2 .5z" fill="#3d5f8f"/><path d="M757.3000000000001 400.2q8.3 -3 16.6 0M765.6 392.9q-5 9.3 0 18.6" fill="none" stroke="#dfeaf6" stroke-width=".6"/><circle cx="760.6" cy="408" r="4.600" fill="#f2f2f2" stroke="#222" stroke-width=".9"/><path d="M757.6 406.5l2-2l2 .5l-.5 2.500l-2 1.500zM761.1 408.5l2.500-.5l.5 2.500l-2.500 1.500zM758.1 409.5l1.500 .5v2z" fill="#1a1a1a"/><g transform="translate(768.2 405.4) scale(0.8666666666666667)"><rect x="0" y="0" width="9" height="9" rx="2" fill="#5a9a52"/><path d="M4.5 1.8v5.4M1.8 4.5h5.4" stroke="#fff" stroke-width="1.7"/></g><circle cx="765.6" cy="430.2" r="9.3" fill="#25405f" stroke="#1b2f48" stroke-width=".9"/><ellipse cx="765.6" cy="430.2" rx="4.200" ry="8.100000000000001" fill="#9fbbdc"/><path d="M757.8000000000001 426.0h15.600000000000001M756.8000000000001 430.2h17.6M757.8000000000001 434.4h15.600000000000001" stroke="#9fbbdc" stroke-width="1.100"/><path d="M762.6 428.0h6M762.6 432.4h6" stroke="#25405f" stroke-width="2.400"/><g transform="translate(768.2 433.4) scale(0.8666666666666667)"><rect x="0" y="0" width="9" height="9" rx="2" fill="#5a9a52"/><path d="M4.5 1.8v5.4M1.8 4.5h5.4" stroke="#fff" stroke-width="1.7"/></g><circle cx="765.6" cy="458.2" r="9.3" fill="#f4f8fc" stroke="#6f8fba" stroke-width=".9"/><path d="M757.5000000000001 454.2h16.200000000000003M756.7 458.2h17.8M757.5000000000001 462.2h16.200000000000003M765.6 448.9v18.6M765.1 448.9q-8 9.3 0 18.6M766.1 448.9q8 9.3 0 18.6" fill="none" stroke="#9db5d6" stroke-width=".7"/><g transform="translate(758.8000000000001 452.0) scale(0.66)"><path d="M0.6 2.2L7 17M13.6 2.2L7 17M13.6 2.2h6" fill="none" stroke="#2c3e55" stroke-width="1.2"/><g fill="#fff" stroke="#2c3e55" stroke-width=".9"><path d="M0.6 .4l1.7 1.8l-1.7 1.8l-1.7-1.8zM13.6 .4l1.7 1.8l-1.7 1.8l-1.7-1.8zM19.8 .6l1.7 1.8l-1.7 1.8l-1.7-1.8z"/><circle cx="7" cy="17" r="1.5"/></g></g><g transform="translate(768.2 461.4) scale(0.8666666666666667)"><rect x="0" y="0" width="9" height="9" rx="2" fill="#5a9a52"/><path d="M4.5 1.8v5.4M1.8 4.5h5.4" stroke="#fff" stroke-width="1.7"/></g><circle cx="765.6" cy="486.2" r="9.3" fill="#f4f8fc" stroke="#6f8fba" stroke-width=".9"/><path d="M757.5000000000001 482.2h16.200000000000003M756.7 486.2h17.8M757.5000000000001 490.2h16.200000000000003M765.6 476.9v18.6M765.1 476.9q-8 9.3 0 18.6M766.1 476.9q8 9.3 0 18.6" fill="none" stroke="#9db5d6" stroke-width=".7"/><g transform="translate(758.8000000000001 480.0) scale(0.66)"><path d="M0.6 2.2L7 17M13.6 2.2L7 17M13.6 2.2h6" fill="none" stroke="#2c3e55" stroke-width="1.2"/><g fill="#fff" stroke="#2c3e55" stroke-width=".9"><path d="M0.6 .4l1.7 1.8l-1.7 1.8l-1.7-1.8zM13.6 .4l1.7 1.8l-1.7 1.8l-1.7-1.8zM19.8 .6l1.7 1.8l-1.7 1.8l-1.7-1.8z"/><circle cx="7" cy="17" r="1.5"/></g></g><circle cx="760.6" cy="492" r="4.600" fill="#f2f2f2" stroke="#222" stroke-width=".9"/><path d="M757.6 490.5l2-2l2 .5l-.5 2.500l-2 1.500zM761.1 492.5l2.500-.5l.5 2.500l-2.500 1.500zM758.1 493.5l1.500 .5v2z" fill="#1a1a1a"/><g transform="translate(768.2 489.4) scale(0.8666666666666667)"><rect x="0" y="0" width="9" height="9" rx="2" fill="#5a9a52"/><path d="M4.5 1.8v5.4M1.8 4.5h5.4" stroke="#fff" stroke-width="1.7"/></g></svg>
</body></html>
